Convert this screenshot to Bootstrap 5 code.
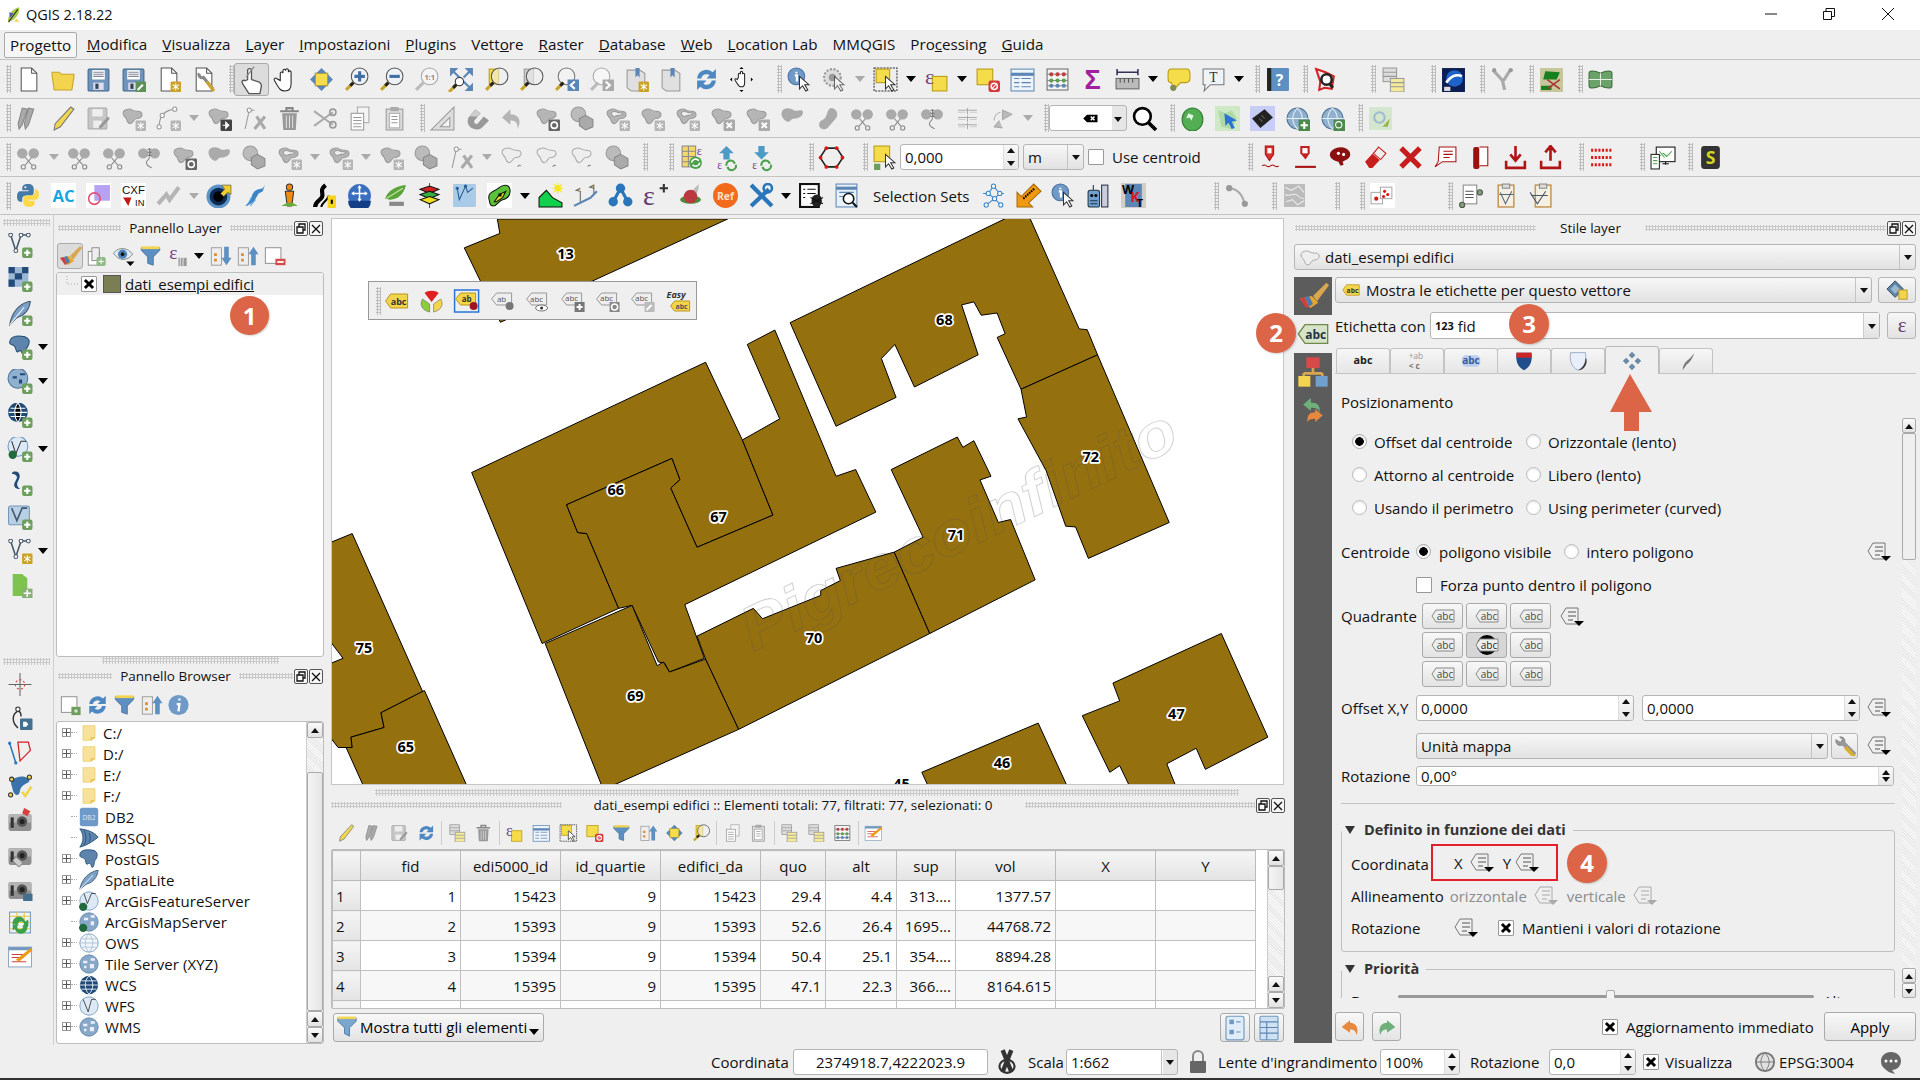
<!DOCTYPE html>
<html lang="it"><head><meta charset="utf-8"><title>QGIS 2.18.22</title>
<link href="https://cdn.jsdelivr.net/npm/bootstrap@5.3.0/dist/css/bootstrap.min.css" rel="stylesheet">
<script src="https://cdn.jsdelivr.net/npm/bootstrap@5.3.0/dist/js/bootstrap.bundle.min.js"></script>
<style>
html,body{width:1920px;height:1080px;overflow:hidden;margin:0}
body{position:relative;background:#efefef;font:15px/1.2 "Open Sans","Liberation Sans",sans-serif;color:#111}
.ttl{height:30px;background:#fff;padding-left:5px;font-size:14.5px}
.wc{width:16px;height:16px;position:absolute;top:6px}.w1{left:1763px}.w2{left:1821px}.w3{left:1880px}
.qm{height:30px;border-bottom:1px solid #c4c4c4;padding-left:4px;font-size:15.2px}
.mi{padding:0 7.5px;line-height:24px;white-space:nowrap;margin-top:2px}
.mi.on{border:1px solid #aaa;background:#f6f6f6;border-radius:2px;padding:0 5px;margin-right:2px}
.tbr{height:39px;border-bottom:1px solid #c4c4c4;display:flex;align-items:center}
.tbr.l{height:38px}
.ic{width:35px;height:25px;flex:none;overflow:visible}
.ic.act{background:#dcdcdc;border:1px solid #aaa;border-radius:3px;height:33px}
.ar{flex:none;width:16px;height:6px;position:relative}
.ar::after{content:"";position:absolute;left:3px;top:0;border:5px solid transparent;border-top:6px solid #000;border-bottom:0}
.ar.g::after{border-top-color:#aaa}
.gr{flex:none;width:5px;height:28px;margin-left:8px;background:radial-gradient(circle,#bdbdbd 1px,transparent 1.3px) 0 0/3px 3px}
.gr.f{margin-left:6px}
.m4{margin-left:4px}.m7{margin-left:7px}.m9{margin-left:9px}.m11{margin-left:11px}.m14{margin-left:14px}.m18{margin-left:18px}.m20{margin-left:20px}.m21{margin-left:21px}.m23{margin-left:23px}.m28{margin-left:28px}.m30{margin-left:30px}.m48{margin-left:48px}.m63{margin-left:63px}
.mn{height:830px}
.lt{width:54px;border-right:1px solid #cfcfcf;flex:none}
.lt .ic{width:38px;height:25px}
.lt .ar{margin-left:-4px}
.lt .rw{height:34px;padding-left:1px;display:flex;align-items:center}
.hg{flex:1;height:6px;background:radial-gradient(circle,#c9c9c9 1px,transparent 1.3px) 0 0/3px 3px}
.hgl{height:7px;margin:4px 3px 2px;background:radial-gradient(circle,#c9c9c9 1px,transparent 1.3px) 0 0/3px 3px}
.hgs{margin-top:56px}
.lp{width:273px;flex:none}
.ph{height:22px;margin-top:2px;padding:0 4px;display:flex;align-items:center;font-size:13.5px;gap:8px;white-space:nowrap}
.db{flex:none;width:14px;height:15px;border:1px solid #555;border-radius:2px;background:#f6f6f6;margin-left:-7px;display:block}
.ptb{height:33px;display:flex;align-items:center;padding-left:3px}
.ptb .ic{width:27px;height:22px}
.ptb .ic.act{height:26px;width:26px}
.tr{background:#fff;border:1px solid #bdbdbd;border-radius:3px;margin:0 3px 0 2px;position:relative;overflow:hidden}
.t1{height:385px}.t2{height:323px}
.lrow{height:22px;background:#efefef;display:flex;align-items:center;padding-left:8px}
.cb{flex:none;width:16px;height:16px;border:1px solid #999;background:#fff;display:inline-block;border-radius:1px}
.cb svg{display:block;width:14px;height:14px}
.swc{width:18px;height:18px;background:#7b7e52;border:1px solid #555;margin:0 4px 0 6px}
.brow{height:21px;display:flex;align-items:center;letter-spacing:.1px;white-space:nowrap}
.exp{width:9px;height:9px;border:1px solid #999;margin-left:5px;flex:none;background:linear-gradient(90deg,transparent 3px,#555 3px,#555 4px,transparent 4px),linear-gradient(transparent 3px,#555 3px,#555 4px,transparent 4px)}
.exp0{width:9px;margin-left:5px;flex:none}
.dts{flex:none;width:6px;border-top:1px dotted #aaa;margin:0 2px 0 0}
.bi{width:20px;height:20px;flex:none;margin-right:6px}
.bi.f{width:16px;margin:0 6px 0 2px}
.vsb{position:absolute;right:0;top:0;bottom:0;width:17px;background:#efefef;border-left:1px solid #ccc;display:flex;flex-direction:column}
.sbtn{height:16px;flex:none;background:linear-gradient(#fafafa,#e2e2e2);border:1px solid #aaa;border-radius:2px;position:relative}
.sbtn::after{content:"";position:absolute;left:50%;top:50%;margin:-2px 0 0 -4px;border:4px solid transparent;border-bottom:5px solid #111;border-top:0}
.sbtn.dn::after{border-bottom:0;border-top:5px solid #111}
.strk{flex:none;height:34px;background:repeating-linear-gradient(45deg,#e8e8e8 0 1px,#f8f8f8 1px 2px)}
.strk.flex-grow-1{flex:1 1 0;height:auto}
.sthm{flex:1;background:linear-gradient(90deg,#f4f4f4,#e6e6e6);border:1px solid #aaa;border-radius:2px}
.sthm.tth{flex:none;height:24px}
.ct{width:960px;flex:none}
.cv{position:relative;height:567px;width:953px;margin:3px 0 0 4px;background:#fff;border:1px solid #c6c6c6;overflow:hidden}
.cv>svg{position:absolute;left:0;top:0;width:953px;height:567px}
.ftb{position:absolute;left:36px;top:62px;width:329px;height:39px;background:#efefef;border:1px solid #999;display:flex;align-items:center;padding-left:7px}
.ftb .ic{width:35.2px;height:24px}
.ftb .gr{margin:0 -2px 0 0}
.at{height:18px;padding:0 2px 0 4px}
.atb{height:35px;display:flex;align-items:center;padding:3px 0 0 6px}
.atb .is{width:26.7px;height:18px;flex:none;overflow:visible}
.vs{width:1px;height:24px;background:#ccc;flex:none;margin:0 1.5px}
.twr{height:160px;margin:0 2px 0 4px;border:1px solid #bdbdbd;background:#fff;position:relative;overflow:hidden;border-radius:2px}
table.qt{table-layout:fixed;width:924px;margin:0;border-collapse:collapse;font-size:15px}
.qt th{height:30px;font-weight:400;text-align:center;background:linear-gradient(#f5f5f5,#e4e4e4);border:1px solid #bbb;padding:0;white-space:nowrap}
.qt td{height:30px;text-align:right;padding:0 4px;border:1px solid #c0c0c0;white-space:nowrap;overflow:hidden}
.qt tr:nth-child(even) td{background:#f7f7f7}
.qt td.rh{text-align:left;background:linear-gradient(#f5f5f5,#e4e4e4)!important;padding-left:3px}
.c28{width:28px}.c100{width:100px}.c65{width:65px}.c71{width:71px}.c59{width:59px}
.afoot{height:36px;align-items:center;padding:0 3px 0 6px}
.qbtn{background:linear-gradient(#f8f8f8,#e4e4e4);border:1px solid #aaa;border-radius:3px;display:flex;align-items:center;flex:none;padding:0}
.fbtn{width:211px;height:29px;padding-left:3px;gap:3px;white-space:nowrap}
.fbtn svg{width:20px;height:22px}
.ms-n{margin-left:-4px;margin-top:9px}
.rp{flex:1;min-width:0}
.rc{height:26px;margin:5px 4px 0 7px}
.qc{background:linear-gradient(#f7f7f7,#e2e2e2);border:1px solid #b5b5b5;border-radius:3px;display:flex;align-items:center;flex:none;position:relative}
.qc>.ca{position:absolute;right:0;top:0;bottom:0;width:16px;border-left:1px solid #c4c4c4}
.qc>.ca::after{content:"";position:absolute;left:4px;top:50%;margin-top:-2px;border:4px solid transparent;border-top:5px solid #111;border-bottom:0}
.qi{background:#fff;border:1px solid #b5b5b5;border-radius:3px;display:flex;align-items:center;flex:none;position:relative;padding-left:4px}
.qi>.sp2{position:absolute;right:0;top:0;bottom:0;width:15px;border-left:1px solid #ddd;background:linear-gradient(#f8f8f8,#e8e8e8);border-radius:0 3px 3px 0}
.sp2::before,.sp2::after{content:"";position:absolute;left:3px;border:4px solid transparent}
.sp2::before{top:3px;border-bottom:5px solid #111;border-top:0}
.sp2::after{bottom:3px;border-top:5px solid #111;border-bottom:0}
.sb{width:38px;margin-left:7px;background:#5c5c5c;height:766px;flex:none}
.sb .si{height:38px;display:flex;align-items:center;justify-content:center}
.sb .si svg{width:32px;height:32px}
.sb .si svg.sm{width:26px;height:26px}
.sb .si.sel{background:#efefef}
.rm{width:581px;margin-left:3px;flex:none}
.rr1{height:26px;gap:6px}
.rr2{height:27px;gap:7px;margin-top:9px;align-items:center}
.ltxt{white-space:nowrap}
.w88{width:88px}
.tabs{height:28px;margin-top:7px;border-bottom:1px solid #c4c4c4;padding-left:1px;align-items:flex-end}
.qtb{width:54px;height:25px;background:linear-gradient(#f6f6f6,#e6e6e6);border:1px solid #c4c4c4;border-bottom:0;border-radius:3px 3px 0 0;display:flex;justify-content:center;align-items:center;margin-right:-.2px}
.qtb svg{width:26px;height:20px;overflow:visible}
.qtb.on{height:28px;background:#efefef;margin-bottom:-1px;border-color:#bbb}
.ps{height:44px;padding:11px 0 0 6px;display:flex;align-items:center}
.sa{height:580px;gap:7px}
.bd{width:554px;margin-left:6px;overflow:hidden;flex:none}
.svb{width:14px;flex:none;display:flex;flex-direction:column}
.svb .thm{height:127px;flex:none;background:#efefef;border:1px solid #aaa;border-radius:2px}
.svb .trk{flex:1;background:repeating-linear-gradient(45deg,#e8e8e8 0 1px,#f8f8f8 1px 2px)}
.svb .sbtn{height:15px}
.rgrid{padding-top:7px;padding-left:11px;height:107px}
.rg{height:33px;align-items:center;white-space:nowrap}
.rg>div{width:174px;display:flex;align-items:center;gap:7px}
.form-check-input.qr{width:15px;height:15px;margin:0;flex:none;border:1px solid #bbb;background:#fff;box-shadow:inset 0 1px 2px rgba(0,0,0,.12)}
.form-check-input.qr:checked{background:radial-gradient(circle,#000 4px,#fff 4.6px);border-color:#aaa}
.rw2{height:33px;align-items:center;white-space:nowrap}
.lb{width:75px;flex:none}
.lq{width:81px}
.qg{display:grid;grid-template-columns:repeat(3,41px);grid-auto-rows:26px;gap:3px}
.qb{background:linear-gradient(#f8f8f8,#e3e3e3);border:1px solid #aaa;border-radius:3px;display:flex;align-items:center;justify-content:center}
.qb svg{width:24px;height:16px;overflow:visible}
.qb.on{background:#d6d6d6}
.dp{width:24px;height:20px;flex:none}
.inp{height:26px}
.wcv{width:124.5px}
.rcn{margin-top:10px}.rq2{margin-top:2px}
.ro2{margin-top:8px}.so{width:218px}
.ru{margin-top:12px}.su{width:412px}.sw{width:27px;margin-left:3px}
.rr{margin-top:7px}.srt{width:478px;height:20px}
.ln2{height:1px;background:#c4c4c4;margin-top:17px}
.grp{border:1px solid #c0c0c0;border-radius:3px;position:relative;height:122px;margin-top:26px;padding:17px 0 0 9px;width:554px}
.grp+.grp{margin-top:17px}
.gl{position:absolute;left:0;top:-12px;background:#efefef;font-weight:700;color:#333;display:flex;align-items:center;gap:9px;padding:0 7px 0 3px;font-size:14.5px;height:22px}
.gl i{border:5.5px solid transparent;border-top:8px solid #333;border-bottom:0}
.gr2{height:32px;align-items:center;white-space:nowrap}
.bx{width:127px;height:37px;border:2px solid #e3202a;margin:-3px 0 0 0;flex:none;padding-left:21px;align-items:center}
.gry{color:#8c8c8c}
.lb2a{width:80px;flex:none}
.lb2b{width:auto;margin-right:6px}
.lb2c{width:103px;flex:none}
.sld{position:absolute;left:56px;top:25px;width:416px;height:3px;background:#999;border-radius:2px}
.shd{position:absolute;left:208px;top:-5px;width:9px;height:12px;border:1px solid #aaa;border-radius:2px;background:#f4f4f4}
.plo,.phi{position:absolute;top:22px}.plo{left:9px}.phi{left:481px}
.mm{height:29px;margin-top:14px;align-items:center}
.bu{width:29px;height:29px}
.agc{margin-left:201px}
.agt{width:203px;white-space:nowrap}
.ba{width:92px;height:29px}
.stb{height:33px;align-items:center;white-space:nowrap}
.s1{margin-left:711px;width:82px}.s2{width:195px;height:26px;justify-content:center;padding:0}.s3{width:30px;height:26px;margin:0 4px}.s4{width:38px;margin-left:2px}.s5{width:112px;height:26px;background:linear-gradient(90deg,#fff 0 96px,#e6e6e6 96px)}.s6{width:26px;height:24px;margin:0 7px}.s7{width:162px}.s8{width:80px;height:26px}.s9{margin-left:10px;width:79px}.s10{width:87px;height:26px}.s11{margin-left:7px}.s12{width:88px;margin-left:6px}.s13{width:24px;height:22px}.s14{margin-left:2px;width:99px}.s15{width:26px;height:24px}
.stp{height:2px;background:#333}
.ov{position:absolute;width:40px;height:40px;border-radius:50%;background:#dc6547;color:#fff;font:700 24px/40px "Open Sans",sans-serif;text-align:center;box-shadow:1px 1px 2px rgba(0,0,0,.18)}
.o1{left:230px;top:296px;height:39px;width:39px}.o2{left:1256px;top:313px}.o3{left:1509px;top:304px}.o4{left:1567px;top:843px}
.arw{position:absolute;left:1609px;top:374px;width:44px;height:58px}
.spx{position:absolute;width:0;height:0;overflow:hidden}
.h24{height:24px}
.mt7{margin-top:7px}
.flex-none{flex:none}
.sa2{width:119px;margin-left:-3px}.sb2{width:61px}
.cl{width:537px;height:26px}.cr{width:38px;height:26px}
.lb2{width:88px}.ce{width:450px;height:27px}.cf{width:29px;height:27px}
.sz1{font-size:11px}
.qcar{position:absolute;right:0;top:0;bottom:0;width:16px;border-left:1px solid #ccc;background:linear-gradient(#f7f7f7,#e2e2e2)}
.qcar::after{content:"";position:absolute;left:4px;top:50%;margin-top:-2px;border:4px solid transparent;border-top:5px solid #111;border-bottom:0}
.cmb1{width:78px;height:26px;margin-left:0;padding-right:24px;background:linear-gradient(90deg,#fff 0 62px,#e6e6e6 62px)}
.cmb1::after{content:"";position:absolute;right:4px;top:11px;border:4px solid transparent;border-top:5px solid #111;border-bottom:0}
</style></head><body>
<svg class="spx" aria-hidden="true"><defs>
<g id="gs"><rect x="14" y="14" width="10" height="10" rx="1" fill="#b5b5b5"/><path d="M19 15.500v7M16 17l6 4M22 17l-6 4" stroke="#fff"/></g>
<g id="ys"><rect x="14" y="14" width="10" height="10" rx="1" fill="#c9a227"/><path d="M19 15.500v7M16 17l6 4M22 17l-6 4" stroke="#fff"/></g>
<g id="pl"><rect x="14" y="14" width="10" height="10" rx="2" fill="#6c9e5c"/><path d="M19 16v6M16 19h6" stroke="#fff" stroke-width="2"/></g>
<g id="cur"><path d="M12 9v12l3-3 3 5 2-1-3-5h4z" fill="#fff" stroke="#333"/></g>
<g id="bb"><path d="M2 7c0-4 6-5 9-3s8 0 9 3-2 5-5 5-3 5-6 5-3-3-4-5-3-2-3-5z" fill="#b5b5b5" stroke="#999"/></g>
<g id="bw"><path d="M2 7c0-4 6-5 9-3s8 0 9 3-2 5-5 5-3 5-6 5-3-3-4-5-3-2-3-5z" fill="#eee" stroke="#aaa"/></g>
<g id="mh"><path d="M9 15l-7 7" stroke="#caa52c" stroke-width="3"/><path d="M9 15l-3 3" stroke="#222" stroke-width="3"/></g>
<g id="tg"><path d="M1 12l5-7h17v14H6z" fill="#f3d44a" stroke="#b8971a"/></g>
<g id="gb"><circle cx="12" cy="12" r="10" fill="#8fb0cf" stroke="#4f7397"/><path d="M2 12h20M12 2c-6 6-6 14 0 20M12 2c6 6 6 14 0 20" stroke="#e5eef5" fill="none"/></g>
<g id="dc"><path d="M5 1h10l5 5v17H5z" fill="#fff" stroke="#555"/><path d="M15 1v5h5" fill="none" stroke="#555"/></g>
<g id="fl"><rect x="2" y="2" width="20" height="21" rx="1" fill="#6f94bb" stroke="#44658a"/><rect x="6" y="3" width="12" height="9" fill="#fff"/><path d="M7 5h10M7 7h10M7 9h10" stroke="#889"/><rect x="7" y="15" width="10" height="7" fill="#dde"/><rect x="9" y="16" width="3" height="5" fill="#345"/></g>
<g id="qt"><path d="M1 8l4-6h18v12H5z" fill="#eee" stroke="#888"/></g>
<g id="cmo"><rect x="1" y="6" width="22" height="16" rx="2" fill="#8f8f8f"/><rect x="1" y="6" width="22" height="8" fill="#b5b5b5"/><circle cx="14" cy="13" r="5" fill="#555"/><circle cx="14" cy="13" r="2.500" fill="#222"/><rect x="3" y="9" width="3" height="10" fill="#333"/></g>
</defs>
<symbol id="n" viewBox="0 0 24 24"><use href="#dc"/></symbol>
<symbol id="o" viewBox="0 0 24 24"><path d="M1 8V5h7l2 2h12v3l-2 12H3z" fill="#f2d44f" stroke="#c9a227"/></symbol>
<symbol id="s" viewBox="0 0 24 24"><use href="#fl"/></symbol>
<symbol id="sa" viewBox="0 0 24 24"><use href="#fl"/><rect x="14" y="14" width="10" height="10" fill="#5d9155"/><path d="M16 22l5-5" stroke="#fff" stroke-width="2"/></symbol>
<symbol id="np" viewBox="0 0 24 24"><use href="#dc"/><use href="#ys"/></symbol>
<symbol id="cm" viewBox="0 0 24 24"><use href="#dc"/><path d="M8 6a3 3 0 004 4l9 11" stroke="#888" stroke-width="3" fill="none"/><path d="M15 14l7 9" stroke="#caa52c" stroke-width="3"/></symbol>
<symbol id="tp" viewBox="0 0 24 24"><path d="M9 12V5a1.500 1.500 0 013 0v7l6 2c2 1 2 2 1.500 4l-1 5H10l-5-8c-1-2 1-3 2-2z" fill="#fff" stroke="#555"/><path d="M8 10l6-8" stroke="#888"/></symbol>
<symbol id="h" viewBox="0 0 24 24"><path d="M6 13V6a1.300 1.300 0 012.600 0V3.500a1.300 1.300 0 012.600 0V3a1.300 1.300 0 012.600 0V5a1.300 1.300 0 012.600 0v11c0 4-2 7-6 7s-5-2-7-5l-3-5c-1-2 1-3 2-2z" fill="#fff" stroke="#222"/></symbol>
<symbol id="ps" viewBox="0 0 24 24"><rect x="6" y="6" width="12" height="12" fill="#f5dc4a" stroke="#b89a10"/><path d="M12 1l5 5H7zM12 23l5-5H7zM1 12l5-5v10zM23 12l-5-5v10z" fill="#5b86b5"/></symbol>
<symbol id="zi" viewBox="0 0 24 24"><circle cx="15" cy="9" r="8" fill="#eef2f6" stroke="#555"/><path d="M10 9h10M15 4v10" stroke="#3f6fa5" stroke-width="3"/><use href="#mh"/></symbol>
<symbol id="zo" viewBox="0 0 24 24"><circle cx="15" cy="9" r="8" fill="#eef2f6" stroke="#555"/><path d="M10 9h10" stroke="#3f6fa5" stroke-width="3"/><use href="#mh"/></symbol>
<symbol id="zf" viewBox="0 0 24 24"><path d="M1 1h8L1 9zM23 1h-8l8 8zM23 23h-8l8-8z" fill="#5b86b5"/><path d="M4 4l16 16M20 4l-6 6" stroke="#5b86b5" stroke-width="2"/><circle cx="10" cy="14" r="4" fill="#fff" stroke="#333"/><use href="#mh" transform="translate(-2 2)"/></symbol>
<symbol id="zs" viewBox="0 0 24 24"><rect x="5" y="2" width="9" height="14" fill="#f5dc4a" stroke="#b89a10"/><circle cx="15" cy="9" r="8" fill="#eee" fill-opacity=".6" stroke="#555"/><use href="#mh"/></symbol>
<symbol id="zl" viewBox="0 0 24 24"><rect x="5" y="2" width="9" height="14" fill="#ccc" stroke="#999"/><circle cx="15" cy="9" r="8" fill="#eee" fill-opacity=".6" stroke="#555"/><use href="#mh"/></symbol>
<symbol id="zp" viewBox="0 0 24 24"><circle cx="12" cy="9" r="8" fill="#f2f2f2" stroke="#777"/><use href="#mh"/><rect x="13" y="12" width="11" height="11" fill="#5b86b5"/><path d="M20 14l-4 3.500 4 3.500" fill="none" stroke="#fff" stroke-width="2"/></symbol>
<symbol id="zn" viewBox="0 0 24 24"><circle cx="12" cy="9" r="8" fill="#f6f6f6" stroke="#aaa"/><path d="M9 15l-7 7" stroke="#bbb" stroke-width="3"/><rect x="13" y="12" width="11" height="11" fill="#aaa"/><path d="M16 14l4 3.500-4 3.500" fill="none" stroke="#fff" stroke-width="2"/></symbol>
<symbol id="bk" viewBox="0 0 24 24"><path d="M3 3h12l5 3v17H7l-4-3z" fill="#e0e0e0" stroke="#999"/><path d="M11 1v9l2-2 2 2V1" fill="#5b86b5"/><use href="#ys"/></symbol>
<symbol id="bm" viewBox="0 0 24 24"><path d="M3 3h12l5 3v17H7l-4-3z" fill="#e0e0e0" stroke="#999"/><path d="M11 1v9l2-2 2 2V1" fill="#5b86b5"/></symbol>
<symbol id="rf" viewBox="0 0 24 24"><path d="M3 11a9 9 0 0115-6l3-3v9h-9l3-3a5 5 0 00-8 3zM21 13a9 9 0 01-15 6l-3 3v-9h9l-3 3a5 5 0 008-3z" fill="#4d88c2"/></symbol>
<symbol id="pt" viewBox="0 0 24 24"><path d="M9 10V7a1 1 0 012 0V5a1 1 0 012 0v2a1 1 0 012 0v8c0 2-1 4-3 4s-3-1-4-3l-2-3c-1-2 1-2 2-1z" fill="#fff" stroke="#222"/><path d="M12 0l2 2h-4zM12 24l2-2h-4zM1 12l2-2v4zM23 12l-2-2v4z"/></symbol>
<symbol id="id" viewBox="0 0 24 24"><circle cx="9" cy="9" r="8" fill="#6f99c6" stroke="#4a72a0"/><path d="M9 4.500v1.500M7.500 8H9.500v6" stroke="#fff" stroke-width="2" fill="none"/><use href="#cur"/></symbol>
<symbol id="ac" viewBox="0 0 24 24"><circle cx="10" cy="10" r="8" fill="#ddd" stroke="#999" stroke-width="2" stroke-dasharray="2 1.500"/><circle cx="10" cy="10" r="3.500" fill="#999"/><g opacity=".7"><use href="#cur"/></g></symbol>
<symbol id="sl" viewBox="0 0 24 24"><rect x="1" y="1" width="22" height="22" fill="none" stroke="#333" stroke-dasharray="2 1"/><rect x="3" y="2" width="13" height="13" fill="#f5dc4a" stroke="#b89a10"/><use href="#cur"/></symbol>
<symbol id="ds" viewBox="0 0 24 24"><rect x="2" y="2" width="15" height="15" fill="#f5dc4a" stroke="#b89a10"/><rect x="13" y="13" width="11" height="11" rx="2" fill="#d43a3a"/><circle cx="18.500" cy="18.500" r="3" fill="none" stroke="#fff" stroke-width="1.400"/><path d="M16 21l5-5" stroke="#fff"/></symbol>
<symbol id="tb" viewBox="0 0 24 24"><rect x="1" y="2" width="22" height="21" fill="#eef4fa" stroke="#5b86b5"/><path d="M1 7h22" stroke="#5b86b5" stroke-width="3"/><path d="M4 11h5M11 11h9M4 15h5M11 15h9M4 19h5M11 19h9" stroke="#5b86b5"/></symbol>
<symbol id="ab" viewBox="0 0 24 24"><path d="M2 2h20v20H2z" fill="#f4f4f4" stroke="#666"/><path d="M2 7h20M2 13h20M2 18h20" stroke="#888"/><path d="M6 7h.1M12 7h.1M18 7h.1" stroke="#c04040" stroke-width="4" stroke-linecap="round"/><path d="M6 13h.1M12 13h.1M18 13h.1" stroke="#5b9e50" stroke-width="4" stroke-linecap="round"/><path d="M6 18h.1M12 18h.1M18 18h.1" stroke="#5b86b5" stroke-width="4" stroke-linecap="round"/></symbol>
<symbol id="ms" viewBox="0 0 24 24"><path d="M2 5h20M2 2v6M22 2v6" stroke="#335" stroke-width="1.500"/><rect x="1" y="11" width="22" height="10" fill="#bbb" stroke="#666"/><path d="M5 11v4M9 11v4M13 11v4M17 11v4" stroke="#555"/></symbol>
<symbol id="bl" viewBox="0 0 24 24"><path d="M5 2h15c3 0 3 3 3 5v4c0 3-2 4-5 4h-4l-4 4c-2 2-4 2-4 0s0-4-1-4c-3 0-3-3-3-4V6c0-3 1-4 3-4z" fill="#f5dc4a" stroke="#b89a10"/><circle cx="7" cy="20" r="3" fill="#7b8f55"/></symbol>
<symbol id="rq" viewBox="0 0 24 24"><path d="M3 2l9 3 8 4-2 12-7-1-5 2 1-8z" fill="none" stroke="#d02525" stroke-width="2"/><circle cx="13" cy="12" r="5" fill="#fff" stroke="#222" stroke-width="2.500"/><path d="M16 16l3 4" stroke="#222" stroke-width="3"/></symbol>
<symbol id="tt" viewBox="0 0 24 24"><rect x="2" y="1" width="13" height="13" fill="#ddd" stroke="#999"/><path d="M2 5h13M2 9h13" stroke="#999"/><rect x="9" y="11" width="13" height="13" fill="#f5ea9a" stroke="#999"/><path d="M9 15h13M9 19h13" stroke="#999"/></symbol>
<symbol id="ge" viewBox="0 0 24 24"><rect x="1" y="1" width="22" height="23" fill="#0b1f55"/><circle cx="13" cy="11" r="8" fill="#1e64c8"/><path d="M5 15c6-8 12-8 15-6" stroke="#fff" stroke-width="2.500" fill="none"/><rect x="3" y="19" width="6" height="4" fill="#ddd"/></symbol>
<symbol id="yy" viewBox="0 0 24 24"><path d="M3 3l9 10 2 9M20 2l-7 11" stroke="#aaa" stroke-width="3" fill="none"/><circle cx="4" cy="3" r="2" fill="#999"/><circle cx="20" cy="3" r="2" fill="#999"/></symbol>
<symbol id="cls" viewBox="0 0 24 24"><rect x="1" y="1" width="22" height="23" fill="#c7c59b"/><path d="M6 4l14 1-3 7H4zM2 18h10v4H2z" fill="#17801f"/><path d="M8 12l12 9M20 12L8 21" stroke="#a33" stroke-width="1.500"/></symbol>
<symbol id="gbf" viewBox="0 0 24 24"><path d="M1 6c0-3 5-3 11 0 6-3 11-3 11 0v12c0 3-5 3-11 0-6 3-11 3-11 0z" fill="#6aa26a" stroke="#3c6b3c"/><path d="M12 6v12M1 12h22" stroke="#e5f0e5"/></symbol>
<symbol id="gp" viewBox="0 0 24 24"><path d="M6 2L2 17l1 5 3-4 5-15zM12 2L8 17l1 5 3-4 5-15z" fill="#aaa" stroke="#888"/></symbol>
<symbol id="pc" viewBox="0 0 24 24"><path d="M19 1l3 2L9 20l-6 3 1-6z" fill="#f0d64e" stroke="#777"/></symbol>
<symbol id="sv2" viewBox="0 0 24 24"><rect x="2" y="2" width="18" height="20" rx="1" fill="#c6c6c6" stroke="#aaa"/><rect x="6" y="3" width="10" height="7" fill="#eee"/><rect x="7" y="14" width="8" height="7" fill="#eee"/><path d="M21 10l2 2-9 10-2-2z" fill="#999"/></symbol>
<symbol id="bs" viewBox="0 0 24 24"><use href="#bb"/><use href="#gs"/></symbol>
<symbol id="bwh" viewBox="0 0 24 24"><use href="#bw"/><path d="M17 21c1-2 2-2 3-1" stroke="#888" fill="none"/></symbol>
<symbol id="nd" viewBox="0 0 24 24"><path d="M3 20C3 10 8 4 18 3" fill="none" stroke="#999"/><circle cx="3" cy="20" r="2" fill="#fff" stroke="#999"/><circle cx="18" cy="3" r="2" fill="#fff" stroke="#999"/><circle cx="6" cy="9" r="2" fill="#fff" stroke="#999"/><use href="#gs"/></symbol>
<symbol id="mv" viewBox="0 0 24 24"><use href="#bb"/><rect x="13" y="13" width="11" height="11" rx="1" fill="#444"/><path d="M15 18.500h4M18 15.500l3 3-3 3z" stroke="#fff" fill="#fff"/></symbol>
<symbol id="nt" viewBox="0 0 24 24"><path d="M3 22L7 4h5" fill="none" stroke="#999"/><circle cx="7" cy="4" r="2" fill="#fff" stroke="#999"/><path d="M12 22L22 10M14 10l8 12" stroke="#aaa" stroke-width="3"/></symbol>
<symbol id="tr" viewBox="0 0 24 24"><path d="M3 5h18M9 5V2h6v3" stroke="#888" stroke-width="2" fill="none"/><path d="M5 7h14l-1 16H6z" fill="#999"/><path d="M9 9v12M12 9v12M15 9v12" stroke="#ddd"/></symbol>
<symbol id="sc" viewBox="0 0 24 24"><path d="M2 5l18 13M2 19L20 6" stroke="#aaa" stroke-width="2"/><circle cx="20" cy="6" r="3" fill="none" stroke="#999" stroke-width="1.500"/><circle cx="20" cy="18" r="3" fill="none" stroke="#999" stroke-width="1.500"/></symbol>
<symbol id="cp" viewBox="0 0 24 24"><rect x="10" y="1" width="11" height="15" fill="#f4f4f4" stroke="#aaa"/><rect x="4" y="7" width="12" height="16" fill="#fff" stroke="#999"/><path d="M6 11h8M6 14h8M6 17h8M6 20h8" stroke="#999"/></symbol>
<symbol id="pa" viewBox="0 0 24 24"><rect x="4" y="3" width="16" height="20" fill="#ddd" stroke="#999"/><rect x="8" y="1" width="8" height="4" fill="#aaa"/><rect x="7" y="7" width="10" height="14" fill="#fff" stroke="#aaa"/><path d="M9 10h6M9 13h6M9 16h6" stroke="#999"/></symbol>
<symbol id="tru" viewBox="0 0 24 24"><path d="M1 23h22V1z" fill="#ddd" stroke="#999"/><path d="M10 20h9v-9z" fill="#f4f4f4" stroke="#999"/></symbol>
<symbol id="mag" viewBox="0 0 24 24"><path d="M4 10l6-7 5 4-6 7c-1 2 1 4 3 3l6-7 5 4-7 7c-5 3-10 1-12-2s-2-6 0-9z" fill="#999"/><path d="M4 10l6-7 5 4-3 3z" fill="#ccc"/></symbol>
<symbol id="un" viewBox="0 0 24 24"><path d="M10 3L2 11l8 7v-4c5 0 7 2 7 8 4-8 1-14-7-14z" fill="#b5b5b5"/></symbol>
<symbol id="bu" viewBox="0 0 24 24"><use href="#bb"/><rect x="13" y="13" width="11" height="11" rx="1" fill="#666"/><circle cx="18.500" cy="18.500" r="3" fill="none" stroke="#fff" stroke-width="1.500"/></symbol>
<symbol id="hx" viewBox="0 0 24 24"><circle cx="8" cy="8" r="7" fill="#bbb" stroke="#999"/><path d="M15 9l7 4v7l-7 3-6-4v-7z" fill="#aaa" stroke="#888"/></symbol>
<symbol id="rg" viewBox="0 0 24 24"><use href="#bb"/><path d="M6 7c0-2 4-2 6-1s4 0 5 1-2 2-4 2-3 1-4 1-3-1-3-3z" fill="#eee" stroke="#999"/><use href="#gs"/></symbol>
<symbol id="rx" viewBox="0 0 24 24"><use href="#bb"/><rect x="13" y="13" width="11" height="11" rx="1" fill="#aaa"/><path d="M16 16l5 5M21 16l-5 5" stroke="#fff" stroke-width="2"/></symbol>
<symbol id="lf" viewBox="0 0 24 24"><path d="M2 5c2-4 8-3 11-1s9-2 9 2-4 6-8 6-4 4-7 3-7-6-5-10z" fill="#aaa"/></symbol>
<symbol id="bn" viewBox="0 0 24 24"><path d="M16 2c5 1 7 6 4 10l-8 9c-4 3-9 0-8-4s4-3 6-6 2-9 6-9z" fill="#aaa"/></symbol>
<symbol id="sb" viewBox="0 0 24 24"><circle cx="6" cy="8" r="5" fill="#aaa"/><circle cx="17" cy="8" r="5" fill="#aaa"/><path d="M9 12l6 7M15 12l-6 7" stroke="#888"/><circle cx="7" cy="21" r="2" fill="none" stroke="#888"/><circle cx="17" cy="21" r="2" fill="none" stroke="#888"/></symbol>
<symbol id="rs" viewBox="0 0 24 24"><circle cx="6" cy="8" r="5" fill="#aaa"/><circle cx="17" cy="8" r="5" fill="#aaa"/><path d="M10 4h4M10 7h4M10 10h4M12 3v8" stroke="#777"/><path d="M12 11c0 4-3 3-3 6s4 4 5 5" fill="none" stroke="#888"/></symbol>
<symbol id="ls" viewBox="0 0 24 24"><path d="M3 4h18M3 11h18M3 18h18M12 2v6M12 9v6M12 16v6" stroke="#aaa"/><path d="M3 6h7M14 6h7M3 13h7M14 13h7M3 20h7M14 20h7" stroke="#ccc"/></symbol>
<symbol id="ro" viewBox="0 0 24 24"><path d="M12 4v9l9-5zM12 21l-8-1 5-6" fill="#bbb" stroke="#aaa"/><path d="M10 6a8 8 0 00-6 8" fill="none" stroke="#aaa"/></symbol>
<symbol id="ers" viewBox="0 0 24 24"><path d="M3 12.500l5-5h14v10H8z"/><path d="M13 10l5 5M18 10l-5 5" stroke="#fff" stroke-width="2"/></symbol>
<symbol id="mgb" viewBox="0 0 24 24"><circle cx="10" cy="10" r="8" fill="#fff" stroke="#000" stroke-width="2.500"/><path d="M16 16l7 7" stroke="#000" stroke-width="3.500"/></symbol>
<symbol id="gg" viewBox="0 0 24 24"><ellipse cx="12" cy="13" rx="10" ry="11" fill="#53ad53" stroke="#2f7a2f"/><path d="M8 7l5 2-2 5-2-3-3 1z" fill="#e4f5e4"/></symbol>
<symbol id="gmp" viewBox="0 0 24 24"><rect width="24" height="24" fill="#cfe8c6"/><path d="M3 4l7 3 6-3 5 8-5 10-10-2z" fill="#b0d9a5"/><path d="M9 7l12 7-5 1 3 6-3 1-3-6-3 3z" fill="#2a72d8"/></symbol>
<symbol id="bk2" viewBox="0 0 24 24"><rect width="24" height="24" fill="#c7cdf7"/><path d="M2 12l12-9 8 8-12 10z" fill="#222"/><path d="M11 9l3 3M9 12l3 3" stroke="#666"/></symbol>
<symbol id="gl1" viewBox="0 0 24 24"><use href="#gb"/><rect x="13" y="13" width="11" height="11" fill="#4c8a4c"/><path d="M18.500 15v7M15 18.500h7" stroke="#fff" stroke-width="2"/></symbol>
<symbol id="gl2" viewBox="0 0 24 24"><use href="#gb"/><rect x="13" y="13" width="11" height="11" fill="#4c8a4c"/><circle cx="18" cy="18" r="3" fill="none" stroke="#fff"/></symbol>
<symbol id="gm2" viewBox="0 0 24 24"><rect x="1" y="1" width="22" height="22" fill="#d4e6cd"/><circle cx="11" cy="11" r="5" fill="none" stroke="#9cbccf" stroke-width="2"/><path d="M14 20l7-8-2 8z" fill="#9bb34a"/></symbol>
<symbol id="hxr" viewBox="0 0 24 24"><path d="M7 3h10l6 9-6 9H7L1 12z" fill="none" stroke="#222" stroke-width="1.500"/><circle cx="1.500" cy="12" r="1.800" fill="#e01515"/><circle cx="22.500" cy="12" r="1.800" fill="#e01515"/><circle cx="7" cy="3" r="1.800" fill="#e01515"/><circle cx="17" cy="3" r="1.800" fill="#e01515"/><circle cx="7" cy="21" r="1.800" fill="#e01515"/><circle cx="17" cy="21" r="1.800" fill="#e01515"/></symbol>
<symbol id="sp" viewBox="0 0 24 24"><rect x="1" y="1" width="15" height="15" fill="#f5dc4a" stroke="#b89a10"/><rect x="1" y="18" width="6" height="6" fill="#6ba05a"/><use href="#cur"/></symbol>
<symbol id="rp1" viewBox="0 0 24 24"><path d="M7 1h8v8l-4 6-4-6z" fill="#d83030" stroke="#a11"/><rect x="9" y="3" width="4" height="5" fill="#fff"/><path d="M4 20c4-3 4 3 8 0s4 3 8 0" fill="none" stroke="#a11"/></symbol>
<symbol id="rp2" viewBox="0 0 24 24"><path d="M7 1h9v7l-4 6-5-6z" fill="#c02020"/><rect x="9" y="3" width="5" height="5" fill="#fff"/><path d="M2 21h20" stroke="#a11" stroke-width="2"/></symbol>
<symbol id="rb" viewBox="0 0 24 24"><path d="M4 5c5-4 14-4 17 2 2 6-5 8-7 9l1 3-3 1-2-4C3 15-1 9 4 5z" fill="#8d1010"/><circle cx="10" cy="8" r="1.500" fill="#fff"/><circle cx="15" cy="9" r="1.500" fill="#fff"/></symbol>
<symbol id="er" viewBox="0 0 24 24"><path d="M2 16L15 2l7 6L9 22H6z" fill="#c81d1d"/><path d="M10 8l7 6" stroke="#fff" stroke-width="2"/><path d="M15 2l7 6-5 6-7-6z" fill="#eee" stroke="#c81d1d"/></symbol>
<symbol id="xr" viewBox="0 0 24 24"><path d="M3 3l18 18M21 3L3 21" stroke="#c81d1d" stroke-width="5"/></symbol>
<symbol id="cmr" viewBox="0 0 24 24"><path d="M6 2h16v14H9l-7 5 3-5z" fill="#fff" stroke="#a11"/><path d="M10 6h9M10 9h9M10 12h6" stroke="#a11"/></symbol>
<symbol id="bkr" viewBox="0 0 24 24"><rect x="5" y="2" width="6" height="21" rx="2" fill="#9c1010"/><path d="M11 2h8v18h-8" fill="#fff" stroke="#a11"/></symbol>
<symbol id="imp" viewBox="0 0 24 24"><path d="M12 1v13M7 9l5 6 5-6" fill="none" stroke="#b01515" stroke-width="2.500"/><path d="M3 15v7h18v-7" fill="none" stroke="#b01515" stroke-width="2.500"/></symbol>
<symbol id="exq" viewBox="0 0 24 24"><path d="M12 15V2M7 7l5-6 5 6" fill="none" stroke="#b01515" stroke-width="2.500"/><path d="M3 15v7h18v-7" fill="none" stroke="#b01515" stroke-width="2.500"/></symbol>
<symbol id="dtr" viewBox="0 0 24 24"><rect width="24" height="24" fill="#eee"/><path d="M2 5h20M2 12h20M2 19h20" stroke="#e01515" stroke-width="3" stroke-dasharray="2 1.500"/></symbol>
<symbol id="dsk" viewBox="0 0 24 24"><rect x="6" y="2" width="18" height="14" fill="#fff" stroke="#111"/><path d="M8 11l5-3 3 3 5-5M9 6l5 6" stroke="#4ba14b" fill="none"/><path d="M12 18h6M15 16v3" stroke="#111"/><rect x="1" y="9" width="8" height="14" fill="#fff" stroke="#222"/><path d="M3 12h4M3 15h4M3 18h4" stroke="#4ba14b"/></symbol>
<symbol id="py" viewBox="0 0 24 24"><path d="M12 1c-5 0-6 2-6 4v2h6v1H4c-2 0-3 2-3 5s1 5 3 5h2v-3c0-2 2-3 4-3h4c2 0 3-1 3-3V5c0-2-2-4-5-4z" fill="#4479a8"/><path d="M12 23c5 0 6-2 6-4v-2h-6v-1h7c2 0 3-2 3-5s-1-5-3-5h-1v3c0 2-2 3-4 3h-4c-2 0-3 1-3 3v4c0 2 2 4 5 4z" fill="#ffd94a"/><circle cx="9" cy="4" r="1" fill="#fff"/></symbol>
<symbol id="pk" viewBox="0 0 24 24"><rect width="24" height="24" fill="#fff"/><rect x="8" y="2" width="15" height="15" fill="#b6a1f5"/><circle cx="8" cy="15" r="5.500" fill="none" stroke="#e05070" stroke-width="1.500"/></symbol>
<symbol id="ln" viewBox="0 0 24 24"><path d="M2 20l8-9 3 5 9-12" fill="none" stroke="#b5b5b5" stroke-width="4"/></symbol>
<symbol id="ri" viewBox="0 0 24 24"><circle cx="11" cy="13" r="10" fill="#0d2c55" stroke="#5b93c7" stroke-width="3"/><circle cx="11" cy="13" r="5" fill="#000"/><path d="M14 2h9v9l-3-2-4 4-3-3 4-4z" fill="#f2cd2f" stroke="#333" stroke-width=".5"/></symbol>
<symbol id="kg" viewBox="0 0 24 24"><path d="M22 2l-2 3-4 1c-4 1-6 4-7 8-1 3-3 5-6 8 5-1 8-4 10-7l3-5 4-2z" fill="#3a86c8"/><path d="M5 22l4-8M8 22l5-6" stroke="#5ba3dc"/></symbol>
<symbol id="pm" viewBox="0 0 24 24"><circle cx="12" cy="4" r="3" fill="#f08a10" stroke="#333"/><path d="M8 8h8l-1 8-1 6h-4l-1-6z" fill="#f08a10" stroke="#333"/><path d="M4 22l6-3h5l5 3z" fill="#68ad3a"/></symbol>
<symbol id="rd" viewBox="0 0 24 24"><path d="M3 23c0-6 7-7 7-11S8 6 13 2" fill="none" stroke="#000" stroke-width="4"/><path d="M9 23c0-4 7-7 7-11" fill="none" stroke="#000" stroke-width="2"/><rect x="15" y="12" width="8" height="12" fill="#f6d51f"/><path d="M19 16v4" stroke="#000" stroke-width="2"/></symbol>
<symbol id="gnb" viewBox="0 0 24 24"><circle cx="12" cy="12" r="11" fill="#3a6fc0"/><path d="M1 17a11 11 0 0022 0z" fill="#143e85"/><path d="M12 3v14M5 10h14" stroke="#fff" stroke-width="1.500"/><path d="M12 2l2 3h-4zM12 18l2-3h-4zM4 10l3-2v4zM20 10l-3-2v4z" fill="#fff"/></symbol>
<symbol id="lfk" viewBox="0 0 24 24"><path d="M3 15C5 8 13 3 23 2c-2 9-8 14-15 14z" fill="#5ba43a"/><path d="M4 15L20 5" stroke="#cfe9b8"/><rect x="7" y="18" width="14" height="4" fill="#888"/></symbol>
<symbol id="sta" viewBox="0 0 24 24"><path d="M12 0v24" stroke="#d02020"/><path d="M3 6l9-3 9 3-9 4z" fill="#d02020" stroke="#111"/><path d="M3 11l9-3 9 3-9 4z" fill="#36b040" stroke="#111"/><path d="M3 16l9-3 9 3-9 4z" fill="#f0e020" stroke="#111"/></symbol>
<symbol id="nm" viewBox="0 0 24 24"><rect x="1" y="1" width="22" height="22" rx="1" fill="#a9cbe8"/><path d="M5 5l2 11 6-13 2 6 5-4" fill="none" stroke="#235b96"/><circle cx="5" cy="5" r="1.500" fill="#235b96"/><circle cx="13" cy="3" r="1.500" fill="#235b96"/></symbol>
<symbol id="gy" viewBox="0 0 24 24"><rect width="24" height="24" fill="#fff"/><path d="M2 16c-2-8 6-8 9-11s10-5 11 1-3 9-7 10-5 6-9 6-3-3-4-6z" fill="#5cc23a" stroke="#111"/><path d="M7 18l5-7 6-3-3 6-6 4z" fill="#f0e020" stroke="#111"/><path d="M11 10h3v3h-3z" fill="#111"/></symbol>
<symbol id="hl" viewBox="0 0 24 24"><path d="M1 23V14l7-7 6 7 9 5v4z" fill="#0fd14a" stroke="#111"/><circle cx="19" cy="5" r="3" fill="#f6e71a"/><path d="M19 0v10M14 5h10M15 1l8 8M23 1l-8 8" stroke="#f6e71a"/></symbol>
<symbol id="pf" viewBox="0 0 24 24"><path d="M1 22l10-5 6-3 6-6" fill="none" stroke="#5b86b5" stroke-width="2"/><path d="M7 18V8l-4-1 4-2M20 10V2l-4 2 4 1" fill="#f2d44f" stroke="#666"/></symbol>
<symbol id="an" viewBox="0 0 24 24"><circle cx="12" cy="5" r="4.500" fill="#2a76ba"/><circle cx="5" cy="18" r="4.500" fill="#2a76ba"/><circle cx="19" cy="18" r="4.500" fill="#2a76ba"/><path d="M12 5l-7 13M12 5l7 13" stroke="#2a76ba" stroke-width="3"/></symbol>
<symbol id="ffl" viewBox="0 0 24 24"><path d="M20 1c0 8-3 12-7 14L8 13z" fill="#bbb"/><ellipse cx="12" cy="16" rx="10" ry="4" fill="#4b8a3a"/><circle cx="12" cy="13" r="6.500" fill="#b83a40"/></symbol>
<symbol id="tl" viewBox="0 0 24 24"><path d="M3 2l20 20M3 22L20 6" stroke="#2a76ba" stroke-width="4"/><circle cx="19" cy="5" r="4" fill="none" stroke="#2a76ba" stroke-width="2.500"/></symbol>
<symbol id="bug" viewBox="0 0 24 24"><rect x="1" y="1" width="18" height="22" fill="#fff" stroke="#111" stroke-width="2"/><path d="M4 6h2M8 6h8M4 10h2M8 10h8M4 14h2" stroke="#111"/><ellipse cx="17" cy="17" rx="5" ry="6" fill="#222"/><path d="M11 14l12 6M11 20l12-6" stroke="#111"/></symbol>
<symbol id="tq" viewBox="0 0 24 24"><rect x="2" y="1" width="20" height="22" fill="#e8f0f8" stroke="#5b86b5"/><path d="M2 5h20" stroke="#5b86b5" stroke-width="3"/><path d="M5 9h14M5 13h5" stroke="#5b86b5"/><circle cx="14" cy="15" r="5" fill="#fff" stroke="#111" stroke-width="1.500"/><path d="M18 19l4 4" stroke="#111" stroke-width="2"/></symbol>
<symbol id="nw" viewBox="0 0 24 24"><path d="M12 3L7 10l6 5-8 6M12 3l6 7-5 5 6 6M7 10H2M18 10h4" fill="none" stroke="#3a86c8"/><g fill="#fff" stroke="#3a86c8"><circle cx="12" cy="3" r="2"/><circle cx="7" cy="10" r="2"/><circle cx="18" cy="10" r="2"/><circle cx="13" cy="15" r="2"/><circle cx="5" cy="21" r="2"/><circle cx="19" cy="21" r="2"/></g></symbol>
<symbol id="sz" viewBox="0 0 24 24"><path d="M1 23V9l4 4L17 1l7 7-12 11 4 4z" fill="#f09a14" stroke="#a86a00"/><path d="M7 15L18 5" stroke="#000" stroke-width="2" stroke-dasharray="1.500 1"/></symbol>
<symbol id="rbt" viewBox="0 0 24 24"><rect x="2" y="7" width="11" height="16" rx="2" fill="#6fa0d0" stroke="#234"/><circle cx="5.500" cy="12" r="1.500"/><circle cx="9.500" cy="12" r="1.500"/><path d="M4 17h7M4 20h7" stroke="#234"/><path d="M7 7V2" stroke="#234"/><rect x="15" y="2" width="6" height="21" fill="#ccd" stroke="#234"/></symbol>
<symbol id="cv" viewBox="0 0 24 24"><path d="M4 5c9 0 14 6 16 16" fill="none" stroke="#aaa" stroke-width="2"/><circle cx="5" cy="5" r="3" fill="#999"/><circle cx="20" cy="20" r="3" fill="#999"/></symbol>
<symbol id="hh" viewBox="0 0 24 24"><rect x="2" y="1" width="20" height="22" fill="#bbb"/><path d="M3 4l6 3 7-4 5 6M3 11c4 3 8-3 12 1s4 2 6 3M4 18l6-2 5 5 6-4" fill="none" stroke="#eee"/></symbol>
<symbol id="wr" viewBox="0 0 24 24"><rect width="24" height="24" fill="#fff"/><rect x="1" y="9" width="11" height="11" fill="#fff" stroke="#aaa"/><rect x="10" y="4" width="11" height="11" fill="#fff" stroke="#aaa"/><circle cx="6" cy="15" r="2" fill="#e01515"/><circle cx="14" cy="8" r="1.500" fill="#e01515"/><circle cx="17" cy="11" r="1.500" fill="#e01515"/><circle cx="13" cy="13" r="1.500" fill="#e01515"/></symbol>
<symbol id="d1" viewBox="0 0 24 24"><rect x="5" y="2" width="13" height="18" fill="#fff" stroke="#888"/><path d="M7 8h8M7 11h8M7 14h8" stroke="#555"/><circle cx="4" cy="21" r="2.500" fill="#7ba26f" stroke="#555"/><circle cx="21" cy="9" r="2.500" fill="#7ba26f" stroke="#555"/></symbol>
<symbol id="d2" viewBox="0 0 24 24"><rect x="5" y="2" width="15" height="21" fill="#f5efe4" stroke="#c49a5e" stroke-width="1.500"/><rect x="9" y="1" width="7" height="4" fill="#ddd" stroke="#888"/><path d="M7 9l5 11 6-12M6 11h14" fill="none" stroke="#567"/></symbol>
<symbol id="d3" viewBox="0 0 24 24"><rect x="7" y="2" width="15" height="21" fill="#f5efe4" stroke="#c49a5e" stroke-width="1.500"/><rect x="11" y="1" width="7" height="4" fill="#ddd" stroke="#888"/><path d="M2 9l7 11 8-12M3 12h16" fill="none" stroke="#456"/></symbol>
<symbol id="va" viewBox="0 0 24 24"><path d="M3 2l5 15 5-15 7 0" fill="none" stroke="#44586c" stroke-width="1.500"/><g fill="#fff" stroke="#44586c"><circle cx="3" cy="2" r="1.800"/><circle cx="8" cy="17" r="1.800"/><circle cx="13" cy="2" r="1.800"/><circle cx="20" cy="2" r="1.800"/></g><use href="#pl"/></symbol>
<symbol id="ra" viewBox="0 0 24 24"><rect x="1" y="0" width="19" height="19" fill="#9db8d4"/><path d="M1 0h6v6H1zM14 0h6v6h-6zM7 6h7v6H7zM1 12h6v7H1z" fill="#234a78"/><use href="#pl"/></symbol>
<symbol id="fe" viewBox="0 0 24 24"><path d="M2 23C4 12 10 3 22 0c-1 9-6 14-13 16z" fill="#7ba0c7" stroke="#44586c"/><path d="M2 23L16 6" stroke="#fff"/><use href="#pl"/></symbol>
<symbol id="el" viewBox="0 0 24 24"><path d="M2 7c0-4 4-6 8-6s8 0 10 3c2 2 0 7-2 9-1 2-1 5-3 5s-1-3-3-3-2 2-3 1-1-5-3-6-4 0-4-3z" fill="#5c84ad" stroke="#284d72"/><use href="#pl"/></symbol>
<symbol id="wm" viewBox="0 0 24 24"><circle cx="10" cy="9" r="9.500" fill="#8fb0cf" stroke="#4f7397"/><path d="M5 7h4v2H5zM12 4h5v2h-5zM11 10h3v4h-3z" fill="#234a78"/><use href="#pl"/></symbol>
<symbol id="wc" viewBox="0 0 24 24"><circle cx="10" cy="9" r="9.500" fill="#1f4a78"/><path d="M1 9h18M3 5h14M3 13h14M10 0c-4 5-4 13 0 19M10 0c4 5 4 13 0 19" stroke="#fff"/><use href="#pl"/></symbol>
<symbol id="wf" viewBox="0 0 24 24"><circle cx="10" cy="9" r="9.500" fill="#ddeaf5" stroke="#7298bd"/><path d="M4 4l4 12 5-12 5 0" stroke="#333" fill="none"/><circle cx="5" cy="17" r="4" fill="#216a3d"/><use href="#pl"/></symbol>
<symbol id="cm2" viewBox="0 0 24 24"><path d="M5 1c6-2 8 3 6 7s-3 6 1 9c-4 1-7-2-5-6s3-5 1-7-5 0-3-3z" fill="#234a78"/><use href="#pl"/></symbol>
<symbol id="vb" viewBox="0 0 24 24"><rect x="1" y="1" width="20" height="18" rx="2" fill="#b8cfe4" stroke="#7298bd"/><path d="M4 3l5 12 5-12 5 0" stroke="#44586c" fill="none" stroke-width="1.500"/><use href="#pl"/></symbol>
<symbol id="vst" viewBox="0 0 24 24"><path d="M3 2l5 15 5-15 7 0" fill="none" stroke="#44586c" stroke-width="1.500"/><g fill="#fff" stroke="#44586c"><circle cx="3" cy="2" r="1.800"/><circle cx="8" cy="17" r="1.800"/><circle cx="13" cy="2" r="1.800"/><circle cx="20" cy="2" r="1.800"/></g><use href="#ys"/></symbol>
<symbol id="gd" viewBox="0 0 24 24"><path d="M5 1h9l5 4v17H5z" fill="#7dc34d"/><rect x="14" y="15" width="10" height="9" fill="#8ab07a"/><path d="M19 16v7M15.500 19.500h7" stroke="#fff" stroke-width="1.500"/></symbol>
<symbol id="tr1" viewBox="0 0 24 24"><path d="M12 1v22M1 12h22" stroke="#666"/><circle cx="12" cy="12" r="4.500" fill="none" stroke="#d04040" stroke-dasharray="2 2"/></symbol>
<symbol id="cmp" viewBox="0 0 24 24"><path d="M8 2a3 3 0 013 0M10 5C4 8 4 16 10 21M10 5c3 0 3 5 3 5" fill="none" stroke="#333" stroke-width="1.400"/><circle cx="10" cy="3" r="2" fill="#fff" stroke="#333"/><rect x="12" y="12" width="12" height="11" rx="1" fill="#44708f"/><path d="M15 15h3l2 2.500-2 2.500h-3z" fill="#fff"/></symbol>
<symbol id="ov1" viewBox="0 0 24 24"><path d="M10 2h10l2 8-10 10z" fill="none" stroke="#d02020" stroke-width="1.200"/><path d="M2 3l6 19" stroke="#2a76ba" stroke-width="1.500"/><g fill="#2a76ba"><circle cx="2" cy="3" r="1.500"/><circle cx="8" cy="22" r="1.500"/></g></symbol>
<symbol id="ov2" viewBox="0 0 24 24"><path d="M5 5c8-5 15-2 16 1s-8 3-9 10-6 4-7-1-3-7 0-10z" fill="#3a73aa"/><g fill="#f2d44f" stroke="#333"><circle cx="4" cy="5" r="2"/><circle cx="21" cy="3" r="2"/><circle cx="3" cy="20" r="2"/></g><path d="M14 17l3 4 6-9" fill="none" stroke="#f2d44f" stroke-width="2.500"/></symbol>
<symbol id="c1" viewBox="0 0 24 24"><use href="#cmo"/><path d="M16 0l6 3-3 5-5-3z" fill="#d94040"/></symbol>
<symbol id="c2" viewBox="0 0 24 24"><use href="#cmo"/><path d="M8 14l7 6-4 4-6-6z" fill="#ccc" stroke="#888"/></symbol>
<symbol id="c3" viewBox="0 0 24 24"><use href="#cmo"/><rect x="15" y="17" width="9" height="7" fill="#44708f"/></symbol>
<symbol id="tbr2" viewBox="0 0 24 24"><rect x="2" y="2" width="20" height="20" fill="#eef4fa" stroke="#7298bd"/><path d="M2 6h20M2 12h20M2 18h20M9 2v20M16 2v20" stroke="#e8c43c"/><path d="M5 14a6 6 0 0112-3l3-2v7h-6l2-2a3 3 0 00-6 0z" fill="#3aa04a"/><path d="M19 15a6 6 0 01-12 3l-2 2v-6h6l-2 2a3 3 0 006-1z" fill="#3aa04a"/></symbol>
<symbol id="frm" viewBox="0 0 24 24"><rect x="1" y="3" width="22" height="19" fill="#fff" stroke="#8fa9c4"/><rect x="1" y="3" width="22" height="3" fill="#7298bd"/><path d="M4 10h12M4 13h8M4 17h14" stroke="#d04040"/><path d="M8 15L22 4l2 2-13 11z" fill="#f09a14"/></symbol>
<symbol id="brs" viewBox="0 0 24 24"><path d="M12 12l10-10 2 2-9 12z" fill="#d9a84e"/><path d="M2 14l9-2 5 5-6 4z" fill="#e5a82e"/><path d="M2 14l4-1 3 7-2 1z" fill="#d04040"/><path d="M6 13l3-1 3 6-3 2z" fill="#4d7ab0"/></symbol>
<symbol id="ad" viewBox="0 0 24 24"><rect x="3" y="7" width="12" height="15" fill="#fff" stroke="#888"/><rect x="7" y="3" width="8" height="14" fill="#eee" stroke="#888"/><rect x="12" y="13" width="10" height="10" rx="2" fill="#8fba87"/><path d="M17 15v6M14 18h6" stroke="#fff"/></symbol>
<symbol id="ey" viewBox="0 0 24 24"><path d="M1 9c6-8 16-6 21 1-6 8-15 8-21-1z" fill="#dfe9f3" stroke="#888"/><circle cx="11" cy="10" r="5" fill="#4a80b5"/><circle cx="11" cy="10" r="2" fill="#111"/><path d="M15 18h9l-4.500 5z"/></symbol>
<symbol id="fu" viewBox="0 0 24 24"><path d="M2 3h20v3l-7 7v9l-6-2v-7L2 6z" fill="#5c8fc2" stroke="#4a72a0"/><path d="M2 3h20" stroke="#f2d44f" stroke-width="3"/></symbol>
<symbol id="exd" viewBox="0 0 24 24"><rect x="2" y="3" width="11" height="19" fill="#eee" stroke="#999"/><rect x="5" y="9" width="3" height="3" fill="#e08a2e"/><rect x="5" y="15" width="3" height="3" fill="#e08a2e"/><path d="M16 2h5v12h3l-5.500 8L13 14h3z" fill="#5c8fc2"/></symbol>
<symbol id="cod" viewBox="0 0 24 24"><rect x="2" y="3" width="11" height="19" fill="#eee" stroke="#999"/><rect x="5" y="9" width="3" height="3" fill="#e08a2e"/><rect x="5" y="15" width="3" height="3" fill="#e08a2e"/><path d="M16 22h5V10h3L18.500 2 13 10h3z" fill="#5c8fc2"/></symbol>
<symbol id="rml" viewBox="0 0 24 24"><rect x="2" y="3" width="17" height="17" fill="#fff" stroke="#888"/><rect x="13" y="15" width="11" height="7" fill="#d84a4a"/><path d="M15 18.500h7" stroke="#fff" stroke-width="2"/></symbol>
<symbol id="adl" viewBox="0 0 24 24"><rect x="2" y="3" width="17" height="17" fill="#fff" stroke="#888"/><rect x="13" y="14" width="10" height="9" fill="#6c9e5c"/><circle cx="18" cy="18.500" r="2" fill="#ddd"/></symbol>
<symbol id="inf" viewBox="0 0 24 24"><circle cx="12" cy="12" r="11" fill="#6f99c6"/><path d="M13 5v2M10 11h3l-1 8" stroke="#fff" stroke-width="2.500" fill="none"/></symbol>
<symbol id="xm" viewBox="0 0 24 24"><path d="M5 5l14 14M19 5L5 19" stroke="#000" stroke-width="5"/></symbol>
<symbol id="fd" viewBox="0 0 24 24"><path d="M3 1h18v18l-6 4H3z" fill="#f8e29a" stroke="#e8c860"/><path d="M15 23v-4h6" fill="#f2cc5c" stroke="#e8b830"/></symbol>
<symbol id="mss" viewBox="0 0 24 24"><path d="M1 1c8 1 16 3 22 10-6 5-14 10-22 12 5-7 5-15 0-22z" fill="#5c84ad" stroke="#284d72"/><path d="M6 3c3 6 3 12 0 18M12 6c2 4 2 8 0 11" stroke="#1f4a78" fill="none"/></symbol>
<symbol id="pgs" viewBox="0 0 24 24"><path d="M1 7c0-4 4-6 9-6s9 0 11 3c2 3 0 8-2 10-1 3-1 8-3 8s-1-5-3-5-3 2-4 1-1-6-3-7-5 0-5-4z" fill="#5c84ad" stroke="#284d72"/></symbol>
<symbol id="spl" viewBox="0 0 24 24"><path d="M1 23C3 12 10 3 23 0c-1 9-6 15-14 17z" fill="#7ba0c7" stroke="#44586c"/><path d="M1 23L17 6" stroke="#fff"/></symbol>
<symbol id="afs" viewBox="0 0 24 24"><circle cx="12" cy="12" r="11" fill="#ddeaf5" stroke="#7298bd"/><path d="M6 3l4 12 5-12 5 0" stroke="#333" fill="none"/><circle cx="5" cy="19" r="5" fill="#216a3d"/></symbol>
<symbol id="ams" viewBox="0 0 24 24"><circle cx="12" cy="12" r="11" fill="#88a8c8" stroke="#5f86ab"/><path d="M6 7h5v3H6zM14 4h5v3h-5zM14 11h4v5h-4z" fill="#eef"/><circle cx="5" cy="19" r="5" fill="#216a3d"/></symbol>
<symbol id="ows" viewBox="0 0 24 24"><circle cx="12" cy="12" r="11" fill="#f2f6fa" stroke="#7298bd"/><path d="M1 12h22M3 7h18M3 17h18M12 1c-6 6-6 16 0 22M12 1c6 6 6 16 0 22" stroke="#a8c0d8" fill="none"/></symbol>
<symbol id="xyz" viewBox="0 0 24 24"><circle cx="12" cy="12" r="11" fill="#88a8c8" stroke="#5f86ab"/><path d="M5 8h5v3H5zM14 5h5v3h-5zM13 12h5v5h-5zM6 14h3v3H6z" fill="#eef"/></symbol>
<symbol id="wcs" viewBox="0 0 24 24"><circle cx="12" cy="12" r="11" fill="#1f4a78"/><path d="M1 12h22M3 7h18M3 17h18M12 1c-6 6-6 16 0 22M12 1c6 6 6 16 0 22" stroke="#fff" fill="none"/></symbol>
<symbol id="wfs" viewBox="0 0 24 24"><circle cx="12" cy="12" r="11" fill="#ddeaf5" stroke="#7298bd"/><path d="M5 4l6 15 4-15h5" stroke="#333" fill="none"/></symbol>
<symbol id="yg" viewBox="0 0 24 24"><path d="M3 10c-3 4-2 11 7 13V15z" fill="#8ccc3f" stroke="#555" stroke-width=".5"/><path d="M21 10c3 4 2 11-7 13V15z" fill="#f2d44f" stroke="#555" stroke-width=".5"/><path d="M5 4c3-3 11-3 14 0l-7 9z" fill="#e02020"/></symbol>
<symbol id="cfg" viewBox="0 0 24 24"><path d="M10 2l9 9-9 9-9-9z" fill="#5b86a8" stroke="#345"/><path d="M10 6l5 5-5 5-5-5z" fill="#9cb8d0"/><rect x="14" y="12" width="9" height="10" fill="#f2d44f" stroke="#b8971a"/></symbol>
<symbol id="hie" viewBox="0 0 24 24"><rect x="7" y="1" width="10" height="8" fill="#d84a4a"/><path d="M12 9v4M5 13h14M5 13v4M19 13v4" stroke="#d9a84e" stroke-width="2"/><rect x="1" y="15" width="9" height="8" fill="#f2d44f"/><rect x="14" y="15" width="9" height="8" fill="#6fa0d0"/></symbol>
<symbol id="und" viewBox="0 0 24 24"><path d="M12 4L2 12l10 7v-4c5 0 7 2 8 7 3-9-1-15-8-15z" fill="#e8873e"/></symbol>
<symbol id="red" viewBox="0 0 24 24"><path d="M12 4l10 8-10 7v-4c-5 0-7 2-8 7-3-9 1-15 8-15z" fill="#6fb07a"/></symbol>
<symbol id="ur" viewBox="0 0 24 24"><path d="M10 1L3 7l7 6v-3c5 0 7 1 8 4 1-6-2-9-8-9z" fill="#6fb07a"/><path d="M14 11l7 6-7 6v-3c-4 0-6 1-7 3-1-6 2-9 7-9z" fill="#e8873e"/></symbol>
<symbol id="tsh" viewBox="0 0 24 24"><path d="M3 2h18c1 8 0 17-9 21C3 19 2 10 3 2z" fill="#204d8c"/><path d="M3 2h18v6H3z" fill="#d02525"/></symbol>
<symbol id="tsw" viewBox="0 0 24 24"><path d="M3 2h18c1 8 0 17-9 21C3 19 2 10 3 2z" fill="#e8effa" stroke="#8ea2c0"/><path d="M21 9c0 6-3 12-9 14 6 1 12-7 10-14z" fill="#333"/></symbol>
<symbol id="tmv" viewBox="0 0 24 24"><path d="M12 1l4 4-4 4-4-4zM12 15l4 4-4 4-4-4zM1 12l4-4 4 4-4 4zM15 12l4-4 4 4-4 4z" fill="#6c8ba8"/></symbol>
<symbol id="tbp" viewBox="0 0 24 24"><path d="M22 2c-2 7-6 12-9 14L8 23c0-5 2-9 6-12 3-2 6-6 8-9z" fill="#7a7a7a"/></symbol>
<symbol id="wch" viewBox="0 0 24 24"><path d="M2 5a5 5 0 007 6L21 23l3-3L12 8A5 5 0 006 2l3 3-2 3z" fill="#999" stroke="#666" stroke-width=".5"/><path d="M14 12l10 11h-5l-8-8z" fill="#d9b02e"/></symbol>
<symbol id="dp" viewBox="0 0 24 20"><path d="M1 9l5-8h12v16H6z" fill="#efefef" stroke="#777"/><path d="M8 5h8M8 9h8M8 13h5" stroke="#555"/><path d="M14 14h10l-5 5z"/></symbol>
<symbol id="dpg" viewBox="0 0 24 20"><path d="M1 9l5-8h12v16H6z" fill="#efefef" stroke="#aaa"/><path d="M8 5h8M8 9h8M8 13h5" stroke="#aaa"/><path d="M14 14h10l-5 5z" fill="#aaa"/></symbol>
<symbol id="flw" viewBox="0 0 24 24"><path d="M1 1h22v4l-8 8v10l-6-3v-7L1 5z" fill="#7ba7cf" stroke="#4a72a0"/><path d="M1 1h22" stroke="#f2d44f" stroke-width="3"/></symbol>
<symbol id="vtr" viewBox="0 0 24 24"><rect x="4" y="2" width="16" height="21" rx="2" fill="#e0edf8" stroke="#7298bd"/><rect x="7" y="5" width="4" height="4" fill="#7298bd"/><rect x="7" y="14" width="4" height="4" fill="#7298bd"/><path d="M13 7h4M13 16h4" stroke="#7298bd"/></symbol>
<symbol id="vtb" viewBox="0 0 24 24"><rect x="4" y="2" width="16" height="21" rx="1" fill="#cfe2f3" stroke="#7298bd"/><path d="M4 7h16M4 12h16M4 17h16M10 7v16" stroke="#5b86b5"/></symbol>
<symbol id="scl" viewBox="0 0 24 24"><path d="M8 1l8 20M16 1L8 21" stroke="#333" stroke-width="4"/><ellipse cx="12" cy="16" rx="7" ry="6" fill="none" stroke="#333" stroke-width="2"/></symbol>
<symbol id="lck" viewBox="0 0 24 24"><path d="M7 11V6a5 5 0 0110 0v5" fill="none" stroke="#888" stroke-width="2"/><rect x="4" y="11" width="16" height="12" rx="1" fill="#666"/></symbol>
<symbol id="gbl" viewBox="0 0 24 24"><circle cx="12" cy="12" r="10" fill="#e0e0e0" stroke="#777" stroke-width="2"/><path d="M2 12h20M12 2c-6 6-6 14 0 20M12 2c6 6 6 14 0 20" stroke="#777" fill="none"/></symbol>
<symbol id="msg" viewBox="0 0 24 24"><path d="M12 2c6 0 10 4 10 9s-4 9-9 9l3 4c-5-1-8-3-10-5-3-2-4-5-4-8 0-5 4-9 10-9z" fill="#666"/><circle cx="7" cy="11" r="1.500" fill="#fff"/><circle cx="12" cy="11" r="1.500" fill="#fff"/><circle cx="17" cy="11" r="1.500" fill="#fff"/></symbol>
</svg>

<div class="ttl d-flex align-items-center"><svg width="17" height="20" viewBox="0 0 24 24"><path d="M4 22C4 12 10 3 20 1c1 8-3 17-16 21z" fill="#a8c94a"/><path d="M5 22L18 4" stroke="#333" stroke-width="1.500"/><path d="M6 8l6 2-5 6z" fill="#4a5ab0"/><path d="M16 17l4 5-7-1z" fill="#f2d44f"/></svg><span class="ms-1">QGIS 2.18.22</span>
<svg class="wc w1" viewBox="0 0 16 16"><path d="M2 8h12" stroke="#111"/></svg><svg class="wc w2" viewBox="0 0 16 16"><path d="M2.500 5.500h8v8h-8zM5 5.500V2.500h8.500v8h-3" fill="none" stroke="#111"/></svg><svg class="wc w3" viewBox="0 0 16 16"><path d="M2 2l12 12M14 2L2 14" stroke="#111"/></svg></div>
<nav class="qm d-flex align-items-start"><span class="mi on">Progetto</span><span class="mi"><u>M</u>odifica</span><span class="mi"><u>V</u>isualizza</span><span class="mi"><u>L</u>ayer</span><span class="mi"><u>I</u>mpostazioni</span><span class="mi"><u>P</u>lugins</span><span class="mi">Vett<u>o</u>re</span><span class="mi"><u>R</u>aster</span><span class="mi"><u>D</u>atabase</span><span class="mi"><u>W</u>eb</span><span class="mi"><u>L</u>ocation Lab</span><span class="mi">MMQGIS</span><span class="mi">Pro<u>c</u>essing</span><span class="mi"><u>G</u>uida</span></nav>

<div class="tbr"><i class="gr f"></i><svg class="ic"><use href="#n"/></svg><svg class="ic"><use href="#o"/></svg><svg class="ic"><use href="#s"/></svg><svg class="ic"><use href="#sa"/></svg><svg class="ic"><use href="#np"/></svg><svg class="ic"><use href="#cm"/></svg><i class="gr"></i><svg class="ic act"><use href="#tp"/></svg><svg class="ic"><use href="#h"/></svg><svg class="ic"><use href="#ps"/></svg><svg class="ic"><use href="#zi"/></svg><svg class="ic"><use href="#zo"/></svg><svg class="ic" viewBox="0 0 24 24"><circle cx="15" cy="9" r="8" fill="#f4f4f4" stroke="#aaa"/><path d="M9 15l-7 7" stroke="#bbb" stroke-width="3"/><text x="15" y="12" font-size="7" font-weight="700" text-anchor="middle" fill="#888">1:1</text></svg><svg class="ic"><use href="#zf"/></svg><svg class="ic"><use href="#zs"/></svg><svg class="ic"><use href="#zl"/></svg><svg class="ic"><use href="#zp"/></svg><svg class="ic"><use href="#zn"/></svg><svg class="ic"><use href="#bk"/></svg><svg class="ic"><use href="#bm"/></svg><svg class="ic"><use href="#rf"/></svg><svg class="ic"><use href="#pt"/></svg><i class="gr m18"></i><svg class="ic"><use href="#id"/></svg><svg class="ic"><use href="#ac"/></svg><i class="ar g"></i><svg class="ic"><use href="#sl"/></svg><i class="ar"></i><svg class="ic" viewBox="0 0 24 24"><rect x="8" y="9" width="14" height="14" fill="#f5dc4a" stroke="#b89a10"/><text x="1" y="16" font-size="21" font-family="Liberation Serif,serif" fill="#7a3f83">ε</text></svg><i class="ar"></i><svg class="ic"><use href="#ds"/></svg><svg class="ic"><use href="#tb"/></svg><svg class="ic"><use href="#ab"/></svg><svg class="ic" viewBox="0 0 24 24"><text x="12" y="21" font-size="26" font-weight="700" text-anchor="middle" font-family="Liberation Sans,sans-serif" fill="#a020a0">Σ</text></svg><svg class="ic"><use href="#ms"/></svg><i class="ar"></i><svg class="ic"><use href="#bl"/></svg><svg class="ic" viewBox="0 0 24 24"><path d="M2 2h20v15H9l-6 6 1-6H2z" fill="#eef3f7" stroke="#777"/><text x="12" y="14" font-size="13" font-family="Liberation Serif,serif" text-anchor="middle" fill="#333">T</text></svg><i class="ar"></i><i class="gr"></i><svg class="ic" viewBox="0 0 24 24"><rect x="2" y="1" width="21" height="22" rx="1" fill="#5d8fc2"/><rect x="2" y="1" width="4" height="22" fill="#222"/><text x="14" y="18" font-size="15" fill="#fff" text-anchor="middle" font-weight="700">?</text></svg><i class="gr"></i><svg class="ic"><use href="#rq"/></svg><i class="gr m28"></i><svg class="ic"><use href="#tt"/></svg><i class="gr m20"></i><svg class="ic"><use href="#ge"/></svg><i class="gr m9"></i><svg class="ic"><use href="#yy"/></svg><i class="gr m9"></i><svg class="ic"><use href="#cls"/></svg><i class="gr m9"></i><svg class="ic"><use href="#gbf"/></svg></div>

<div class="tbr"><i class="gr f"></i><svg class="ic"><use href="#gp"/></svg><svg class="ic"><use href="#pc"/></svg><svg class="ic"><use href="#sv2"/></svg><svg class="ic"><use href="#bs"/></svg><svg class="ic"><use href="#nd"/></svg><i class="ar g"></i><svg class="ic"><use href="#mv"/></svg><svg class="ic"><use href="#nt"/></svg><svg class="ic"><use href="#tr"/></svg><svg class="ic"><use href="#sc"/></svg><svg class="ic"><use href="#cp"/></svg><svg class="ic"><use href="#pa"/></svg><i class="gr"></i><svg class="ic"><use href="#tru"/></svg><svg class="ic"><use href="#mag"/></svg><svg class="ic"><use href="#un"/></svg><svg class="ic"><use href="#bu"/></svg><svg class="ic"><use href="#hx"/></svg><svg class="ic"><use href="#rg"/></svg><svg class="ic"><use href="#bs"/></svg><svg class="ic"><use href="#rg"/></svg><svg class="ic"><use href="#rx"/></svg><svg class="ic"><use href="#rx"/></svg><svg class="ic"><use href="#lf"/></svg><svg class="ic"><use href="#bn"/></svg><svg class="ic"><use href="#sb"/></svg><svg class="ic"><use href="#sb"/></svg><svg class="ic"><use href="#rs"/></svg><svg class="ic"><use href="#ls"/></svg><svg class="ic"><use href="#ro"/></svg><i class="ar g"></i><i class="gr"></i><div class="qi cmb1 justify-content-end" role="presentation"><svg width="24" height="18"><use href="#ers"/></svg></div><svg class="ic"><use href="#mgb"/></svg><i class="gr"></i><svg class="ic"><use href="#gg"/></svg><svg class="ic"><use href="#gmp"/></svg><svg class="ic"><use href="#bk2"/></svg><svg class="ic"><use href="#gl1"/></svg><svg class="ic"><use href="#gl2"/></svg><i class="gr"></i><svg class="ic"><use href="#gm2"/></svg></div>

<div class="tbr"><i class="gr f"></i><svg class="ic"><use href="#sb"/></svg><i class="ar g"></i><svg class="ic"><use href="#sb"/></svg><svg class="ic"><use href="#sb"/></svg><svg class="ic"><use href="#rs"/></svg><svg class="ic"><use href="#bu"/></svg><svg class="ic"><use href="#lf"/></svg><svg class="ic"><use href="#hx"/></svg><svg class="ic"><use href="#rg"/></svg><i class="ar g"></i><svg class="ic"><use href="#rg"/></svg><i class="ar g"></i><svg class="ic"><use href="#bs"/></svg><svg class="ic"><use href="#hx"/></svg><svg class="ic"><use href="#nt"/></svg><i class="ar g"></i><svg class="ic"><use href="#bwh"/></svg><svg class="ic"><use href="#bwh"/></svg><svg class="ic"><use href="#bwh"/></svg><svg class="ic"><use href="#hx"/></svg><i class="gr"></i><i class="gr m21"></i><svg class="ic" viewBox="0 0 24 24"><rect x="3" y="1" width="13" height="20" fill="#f4d86a" stroke="#888"/><path d="M3 6h13M3 11h13M3 16h13M9 1v20" stroke="#888"/><circle cx="16" cy="17" r="6" fill="#4ba14b"/><path d="M12 17a4 4 0 017-2M20 17a4 4 0 01-7 2" stroke="#fff" fill="none" stroke-width="1.500"/><text x="17" y="10" font-size="12" fill="#7a3f83" font-family="Liberation Serif,serif">ε</text></svg><svg class="ic" viewBox="0 0 24 24"><path d="M12 1l7 7h-4v6H9V8H5z" fill="#4d9ac4"/><path d="M12 20a4 4 0 018-2M21 19a4 4 0 01-8 2" stroke="#4ba14b" stroke-width="2" fill="none"/><text x="3" y="23" font-size="11" fill="#7a3f83" font-family="Liberation Serif,serif">ε</text></svg><svg class="ic" viewBox="0 0 24 24"><path d="M12 14l7-7h-4V1H9v6H5z" fill="#4d9ac4"/><path d="M12 20a4 4 0 018-2M21 19a4 4 0 01-8 2" stroke="#4ba14b" stroke-width="2" fill="none"/><text x="3" y="23" font-size="11" fill="#7a3f83" font-family="Liberation Serif,serif">ε</text></svg><i class="gr m30"></i><svg class="ic"><use href="#hxr"/></svg><i class="gr m14"></i><svg class="ic"><use href="#sp"/></svg>
<div class="qi inp sa2">0,000<span class="sp2"></span></div><div class="qc inp ms-1 sb2 ps-1">m<span class="ca"></span></div><span class="cb ms-1"></span><span class="ms-2 ltxt w88">Use centroid</span><i class="gr m48"></i><svg class="ic"><use href="#rp1"/></svg><svg class="ic"><use href="#rp2"/></svg><svg class="ic"><use href="#rb"/></svg><svg class="ic"><use href="#er"/></svg><svg class="ic"><use href="#xr"/></svg><svg class="ic"><use href="#cmr"/></svg><svg class="ic"><use href="#bkr"/></svg><svg class="ic"><use href="#imp"/></svg><svg class="ic"><use href="#exq"/></svg><i class="gr m11"></i><svg class="ic"><use href="#dtr"/></svg><i class="gr m21"></i><svg class="ic"><use href="#dsk"/></svg><i class="gr"></i><svg class="ic" viewBox="0 0 24 24"><rect x="3" y="1" width="18" height="22" rx="3" fill="#333"/><text x="12" y="18" font-size="17" font-weight="700" text-anchor="middle" fill="#d5d51e">S</text></svg></div>

<div class="tbr l"><i class="gr f"></i><svg class="ic"><use href="#py"/></svg><svg class="ic" viewBox="0 0 24 24"><rect width="24" height="24" fill="#fff"/><text x="12" y="18" font-size="16" font-weight="700" text-anchor="middle" fill="#19a5e0">AC</text></svg><svg class="ic"><use href="#pk"/></svg><svg class="ic" viewBox="0 0 24 24"><rect width="24" height="24" fill="#fff"/><path d="M2 14l8 0-3 8z" fill="#c01818"/><text x="12" y="11" font-size="11" text-anchor="middle" font-family="Liberation Sans,sans-serif" fill="#111">CXF</text><text x="18" y="22" font-size="9" text-anchor="middle" font-family="Liberation Sans,sans-serif" fill="#111">IN</text></svg><svg class="ic"><use href="#ln"/></svg><i class="ar g"></i><svg class="ic"><use href="#ri"/></svg><svg class="ic"><use href="#kg"/></svg><svg class="ic"><use href="#pm"/></svg><svg class="ic"><use href="#rd"/></svg><svg class="ic"><use href="#gnb"/></svg><svg class="ic"><use href="#lfk"/></svg><svg class="ic"><use href="#sta"/></svg><svg class="ic"><use href="#nm"/></svg><svg class="ic"><use href="#gy"/></svg><i class="ar"></i><svg class="ic"><use href="#hl"/></svg><svg class="ic"><use href="#pf"/></svg><svg class="ic"><use href="#an"/></svg><svg class="ic" viewBox="0 0 24 24"><path d="M16 5h8M20 1v8" stroke="#333" stroke-width="2"/><text x="0" y="21" font-size="27" font-family="Liberation Serif,serif" fill="#633a6e">ε</text></svg><svg class="ic"><use href="#ffl"/></svg><svg class="ic" viewBox="0 0 24 24"><ellipse cx="12" cy="12" rx="12" ry="12" fill="#f26a1b"/><text x="12" y="16" font-size="10" font-weight="700" text-anchor="middle" fill="#f8e0c8">Ref</text></svg><svg class="ic"><use href="#tl"/></svg><i class="ar"></i><svg class="ic"><use href="#bug"/></svg><svg class="ic"><use href="#tq"/></svg><span class="m9 ltxt">Selection Sets</span><svg class="ic m7"><use href="#nw"/></svg><svg class="ic"><use href="#sz"/></svg><svg class="ic"><use href="#id"/></svg><svg class="ic"><use href="#rbt"/></svg><svg class="ic" viewBox="0 0 24 24"><rect width="24" height="24" fill="#cfcfc8"/><rect x="4" y="1" width="16" height="22" fill="#5b86b5"/><text x="1" y="11" font-size="12" font-weight="700" fill="#000">W</text><text x="9" y="18" font-size="13" font-weight="700" fill="#e01515">K</text><text x="15" y="23" font-size="11" font-weight="700" fill="#000">T</text></svg><i class="gr m63"></i><svg class="ic"><use href="#cv"/></svg><i class="gr m18"></i><svg class="ic"><use href="#hh"/></svg><i class="gr m23"></i><i class="gr m20"></i><svg class="ic"><use href="#wr"/></svg><i class="gr m48"></i><svg class="ic"><use href="#d1"/></svg><svg class="ic"><use href="#d2"/></svg><svg class="ic"><use href="#d3"/></svg></div>

<main class="mn d-flex">
<aside class="lt">
<div class="hgl"></div>
<div class="rw"><svg class="ic"><use href="#va"/></svg></div><div class="rw"><svg class="ic"><use href="#ra"/></svg></div><div class="rw"><svg class="ic"><use href="#fe"/></svg></div><div class="rw"><svg class="ic"><use href="#el"/></svg><i class="ar"></i></div><div class="rw"><svg class="ic"><use href="#wm"/></svg><i class="ar"></i></div><div class="rw"><svg class="ic"><use href="#wc"/></svg></div><div class="rw"><svg class="ic"><use href="#wf"/></svg><i class="ar"></i></div><div class="rw"><svg class="ic"><use href="#cm2"/></svg></div><div class="rw"><svg class="ic"><use href="#vb"/></svg></div><div class="rw"><svg class="ic"><use href="#vst"/></svg><i class="ar"></i></div><div class="rw"><svg class="ic"><use href="#gd"/></svg></div>
<div class="hgl hgs"></div>
<div class="rw"><svg class="ic"><use href="#tr1"/></svg></div><div class="rw"><svg class="ic"><use href="#cmp"/></svg></div><div class="rw"><svg class="ic"><use href="#ov1"/></svg></div><div class="rw"><svg class="ic"><use href="#ov2"/></svg></div><div class="rw"><svg class="ic"><use href="#c1"/></svg></div><div class="rw"><svg class="ic"><use href="#c2"/></svg></div><div class="rw"><svg class="ic"><use href="#c3"/></svg></div><div class="rw"><svg class="ic"><use href="#tbr2"/></svg></div><div class="rw"><svg class="ic"><use href="#frm"/></svg></div>
</aside>
<section class="lp">
<div class="ph"><span class="hg"></span><span>Pannello Layer</span><span class="hg"></span><span class="db"><svg width="12" height="13" viewBox="0 0 12 13" class="d-block"><path d="M2 5h6v6H2zM4 5V2h6v6H8" fill="none" stroke="#111" stroke-width="1.300"/></svg></span><span class="db"><svg width="12" height="13" viewBox="0 0 12 13" class="d-block"><path d="M2 3l8 8M10 3l-8 8" stroke="#111" stroke-width="1.300"/></svg></span></div>
<div class="ptb"><svg class="ic act"><use href="#brs"/></svg><svg class="ic"><use href="#ad"/></svg><svg class="ic"><use href="#ey"/></svg><svg class="ic"><use href="#fu"/></svg><svg class="ic" viewBox="0 0 24 24"><rect x="13" y="14" width="9" height="9" fill="#999"/><path d="M15 14v9M18 14v9" stroke="#eee"/><text x="3" y="15" font-size="21" font-family="Liberation Serif,serif" fill="#7a3f83">ε</text></svg><i class="ar"></i><svg class="ic"><use href="#exd"/></svg><svg class="ic"><use href="#cod"/></svg><svg class="ic"><use href="#rml"/></svg></div>
<div class="tr t1"><div class="lrow"><svg width="16" height="16" class="flex-none"><path d="M2 0v8h13" fill="none" stroke="#aaa" stroke-dasharray="1 2"/></svg><span class="cb"><svg viewBox="0 0 24 24"><use href="#xm"/></svg></span><span class="swc"></span><u class="ltxt">dati_esempi edifici</u></div></div>
<div class="hgl my-0 mx-5"></div>
<div class="ph mt-0 h24"><span class="hg"></span><span>Pannello Browser</span><span class="hg"></span><span class="db"><svg width="12" height="13" viewBox="0 0 12 13" class="d-block"><path d="M2 5h6v6H2zM4 5V2h6v6H8" fill="none" stroke="#111" stroke-width="1.300"/></svg></span><span class="db"><svg width="12" height="13" viewBox="0 0 12 13" class="d-block"><path d="M2 3l8 8M10 3l-8 8" stroke="#111" stroke-width="1.300"/></svg></span></div>
<div class="ptb"><svg class="ic"><use href="#adl"/></svg><svg class="ic"><use href="#rf"/></svg><svg class="ic"><use href="#fu"/></svg><svg class="ic"><use href="#cod"/></svg><svg class="ic"><use href="#inf"/></svg></div>
<div class="tr t2">
<div class="brow"><i class="exp"></i><i class="dts"></i><svg class="bi f"><use href="#fd"/></svg>C:/</div><div class="brow"><i class="exp"></i><i class="dts"></i><svg class="bi f"><use href="#fd"/></svg>D:/</div><div class="brow"><i class="exp"></i><i class="dts"></i><svg class="bi f"><use href="#fd"/></svg>E:/</div><div class="brow"><i class="exp"></i><i class="dts"></i><svg class="bi f"><use href="#fd"/></svg>F:/</div>
<div class="brow"><i class="exp0"></i><i class="dts"></i><svg class="bi" viewBox="0 0 24 24"><rect x="1" y="1" width="22" height="22" rx="3" fill="#6e9ac9"/><text x="12" y="15" font-size="8" fill="#dce8f4" text-anchor="middle">DB2</text></svg>DB2</div><div class="brow"><i class="exp0"></i><i class="dts"></i><svg class="bi"><use href="#mss"/></svg>MSSQL</div><div class="brow"><i class="exp"></i><i class="dts"></i><svg class="bi"><use href="#pgs"/></svg>PostGIS</div><div class="brow"><i class="exp"></i><i class="dts"></i><svg class="bi"><use href="#spl"/></svg>SpatiaLite</div><div class="brow"><i class="exp"></i><i class="dts"></i><svg class="bi"><use href="#afs"/></svg>ArcGisFeatureServer</div><div class="brow"><i class="exp0"></i><i class="dts"></i><svg class="bi"><use href="#ams"/></svg>ArcGisMapServer</div><div class="brow"><i class="exp"></i><i class="dts"></i><svg class="bi"><use href="#ows"/></svg>OWS</div><div class="brow"><i class="exp"></i><i class="dts"></i><svg class="bi"><use href="#xyz"/></svg>Tile Server (XYZ)</div><div class="brow"><i class="exp"></i><i class="dts"></i><svg class="bi"><use href="#wcs"/></svg>WCS</div><div class="brow"><i class="exp"></i><i class="dts"></i><svg class="bi"><use href="#wfs"/></svg>WFS</div><div class="brow"><i class="exp"></i><i class="dts"></i><svg class="bi"><use href="#xyz"/></svg>WMS</div>
<div class="vsb"><div class="sbtn"></div><div class="strk"></div><div class="sthm"></div><div class="sbtn"></div><div class="sbtn dn"></div></div>
</div>
</section>
<section class="ct">
<div class="cv"><svg viewBox="0 0 953 567"><svg x="0" y="0" width="953" height="567" viewBox="2 8 1556 1532" preserveAspectRatio="none"><g fill="#94700f" stroke="#000" stroke-width="1" stroke-linejoin="round">
<path vector-effect="non-scaling-stroke" d="M272 8L276 47 218 86 277 287 428 175 648 8z"/>
<path vector-effect="non-scaling-stroke" d="M612 395L672 605 722 808 598 895 555 735 570 712 557 655 385 780 403 855 418 858 470 1060 345 1155 230 693z"/>
<path vector-effect="non-scaling-stroke" d="M725 308L680 347 733 548 672 605 722 808 598 895 555 735 570 712 557 655 385 780 403 855 418 858 470 1060 492 1052 535 1205 545 1208 553 1232 610 1195 578 1050 890 800 857 685 825 703z"/>
<path vector-effect="non-scaling-stroke" d="M350 1155L492 1052 533 1215 543 1205 553 1232 612 1197 666 1387 445 1550z"/>
<path vector-effect="non-scaling-stroke" d="M598 1135L690 1060 705 1088 800 1025 800 1012 832 985 825 952 920 908 978 1128 666 1387 612 1197z"/>
<path vector-effect="non-scaling-stroke" d="M1023 597L915 685 967 868 920 908 978 1128 1150 983 1110 820 1090 828 1060 713 1078 703 1050 607 1032 625z"/>
<path vector-effect="non-scaling-stroke" d="M1110 0L750 288 825 568 923 490 899 385 921 347 953 462 1057 375 1030 240 1050 232 1062 268 1088 262 1101 318 1088 328 1127 468 1252 375 1235 307 1222 305 1140 0z"/>
<path vector-effect="non-scaling-stroke" d="M1252 375L1127 468 1136 543 1122 548 1168 688 1200 838 1216 840 1237 925 1369 828z"/>
<path vector-effect="non-scaling-stroke" d="M-5 885L35 858 150 1285 82 1342 87 1382 33 1408 35 1436 12 1436-5 1400-5 1212 20 1195-5 1140z"/>
<path vector-effect="non-scaling-stroke" d="M153 1282L82 1342 87 1382 33 1408 35 1436 25 1436 56 1550 225 1550z"/>
<path vector-effect="non-scaling-stroke" d="M1454 1128L1277 1262 1288 1310 1227 1350 1272 1503 1288 1485 1307 1550 1382 1550 1365 1480 1413 1438 1428 1495 1530 1408z"/>
<path vector-effect="non-scaling-stroke" d="M1155 1370L965 1503 978 1550 1205 1550z"/>
</g></svg>
<text transform="translate(421 433) rotate(-25.700)" textLength="476" lengthAdjust="spacingAndGlyphs" font-size="62" font-weight="700" font-style="italic" font-family="Liberation Sans,sans-serif" fill="none" stroke="#555" stroke-opacity=".26">Pigrecoinfinito</text>
<g font-family="Open Sans,sans-serif" font-size="14.500" font-weight="700" text-anchor="middle" fill="#000" stroke="#fff" stroke-width="3.500" paint-order="stroke" stroke-linejoin="round"><text x="233.500" y="40">13</text><text x="612.400" y="106">68</text><text x="758.700" y="243">72</text><text x="283.700" y="276">66</text><text x="386.500" y="303">67</text><text x="624" y="321">71</text><text x="482" y="424">70</text><text x="32" y="434">75</text><text x="303.300" y="482">69</text><text x="844.400" y="500">47</text><text x="73.700" y="533">65</text><text x="670" y="549">46</text><text x="569.600" y="570">45</text></g></svg>
<div class="ftb"><i class="gr"></i><svg class="ic" viewBox="0 0 24 24"><use href="#tg"/><text x="14" y="15.500" font-size="9" font-weight="700" text-anchor="middle" fill="#333">abc</text></svg><svg class="ic"><use href="#yg"/></svg><svg class="ic" viewBox="0 0 24 24"><rect x="0" y="1" width="24" height="22" fill="none" stroke="#2a76d8" stroke-width="1.500"/><path d="M1 10l5-6h15v12H6z" fill="#f3d44a" stroke="#b8971a"/><circle cx="19" cy="17" r="4" fill="#a01525"/><text x="12" y="13" font-size="8" font-weight="700" text-anchor="middle" fill="#333">ab</text></svg><svg class="ic" viewBox="0 0 24 24"><path d="M1 10l5-6h15v12H6z" fill="#eee" stroke="#999"/><circle cx="19" cy="17" r="4" fill="#777"/><text x="11" y="13" font-size="8" text-anchor="middle" fill="#555">ab</text></svg><svg class="ic" viewBox="0 0 24 24"><path d="M1 10l5-6h15v12H6z" fill="#eee" stroke="#999"/><ellipse cx="16" cy="19" rx="6" ry="3" fill="#fff" stroke="#777"/><circle cx="16" cy="19" r="1.500" fill="#333"/><text x="11" y="13" font-size="8" text-anchor="middle" fill="#555">abc</text></svg><svg class="ic" viewBox="0 0 24 24"><path d="M1 10l5-6h15v12H6z" fill="#eee" stroke="#999"/><rect x="14" y="13" width="10" height="10" fill="#777"/><path d="M16 18h6M19 15v6" stroke="#fff" stroke-width="2"/><text x="11" y="12" font-size="8" text-anchor="middle" fill="#555">abc</text></svg><svg class="ic" viewBox="0 0 24 24"><path d="M1 10l5-6h15v12H6z" fill="#eee" stroke="#999"/><rect x="14" y="13" width="10" height="10" fill="#888"/><circle cx="19" cy="18" r="3" fill="none" stroke="#fff" stroke-width="1.500"/><text x="11" y="12" font-size="8" text-anchor="middle" fill="#555">abc</text></svg><svg class="ic" viewBox="0 0 24 24"><path d="M1 10l5-6h15v12H6z" fill="#eee" stroke="#999"/><rect x="14" y="13" width="10" height="10" fill="#bbb"/><path d="M16 21l5-5" stroke="#fff" stroke-width="2"/><text x="11" y="12" font-size="8" text-anchor="middle" fill="#555">abc</text></svg><svg class="ic" viewBox="0 0 24 24"><path d="M4 17l4-5h15v10H8z" fill="#f3d44a" stroke="#b8971a"/><text x="0" y="9" font-size="9" font-weight="700" font-style="italic" fill="#333">Easy</text><text x="15" y="20" font-size="7" font-weight="700" text-anchor="middle" fill="#555">abc</text></svg></div></div>
<div class="hgl mt-1 mb-0 mx-5"></div>
<div class="ph at mt-0"><span class="hg"></span><span class="mx-4">dati_esempi edifici :: Elementi totali: 77, filtrati: 77, selezionati: 0</span><span class="hg"></span><span class="db"><svg width="12" height="13" viewBox="0 0 12 13" class="d-block"><path d="M2 5h6v6H2zM4 5V2h6v6H8" fill="none" stroke="#111" stroke-width="1.300"/></svg></span><span class="db"><svg width="12" height="13" viewBox="0 0 12 13" class="d-block"><path d="M2 3l8 8M10 3l-8 8" stroke="#111" stroke-width="1.300"/></svg></span></div>
<div class="atb"><svg class="is"><use href="#pc"/></svg><svg class="is"><use href="#gp"/></svg><svg class="is"><use href="#sv2"/></svg><svg class="is"><use href="#rf"/></svg><i class="vs"></i><svg class="is"><use href="#tt"/></svg><svg class="is"><use href="#tr"/></svg><i class="vs"></i><svg class="is" viewBox="0 0 24 24"><rect x="8" y="9" width="14" height="14" fill="#f5dc4a" stroke="#b89a10"/><text x="1" y="16" font-size="21" font-family="Liberation Serif,serif" fill="#7a3f83">ε</text></svg><svg class="is"><use href="#tb"/></svg><svg class="is"><use href="#sl"/></svg><svg class="is"><use href="#ds"/></svg><svg class="is"><use href="#fu"/></svg><svg class="is"><use href="#cod"/></svg><svg class="is"><use href="#ps"/></svg><svg class="is"><use href="#zs"/></svg><i class="vs"></i><svg class="is"><use href="#cp"/></svg><svg class="is"><use href="#pa"/></svg><i class="vs"></i><svg class="is"><use href="#tt"/></svg><svg class="is"><use href="#tt"/></svg><svg class="is"><use href="#ab"/></svg><i class="vs"></i><svg class="is"><use href="#frm"/></svg></div>
<div class="twr"><table class="qt"><colgroup><col class="c28"><col class="c100"><col class="c100"><col class="c100"><col class="c100"><col class="c65"><col class="c71"><col class="c59"><col class="c100"><col class="c100"><col class="c100"></colgroup>
<thead><tr><th></th><th>fid</th><th>edi5000_id</th><th>id_quartie</th><th>edifici_da</th><th>quo</th><th>alt</th><th>sup</th><th>vol</th><th>X</th><th>Y</th></tr></thead>
<tbody><tr><td class="rh">1</td><td>1</td><td>15423</td><td>9</td><td>15423</td><td>29.4</td><td>4.4</td><td>313....</td><td>1377.57</td><td></td><td></td></tr>
<tr><td class="rh">2</td><td>2</td><td>15393</td><td>9</td><td>15393</td><td>52.6</td><td>26.4</td><td>1695...</td><td>44768.72</td><td></td><td></td></tr>
<tr><td class="rh">3</td><td>3</td><td>15394</td><td>9</td><td>15394</td><td>50.4</td><td>25.1</td><td>354....</td><td>8894.28</td><td></td><td></td></tr>
<tr><td class="rh">4</td><td>4</td><td>15395</td><td>9</td><td>15395</td><td>47.1</td><td>22.3</td><td>366....</td><td>8164.615</td><td></td><td></td></tr>
<tr><td class="rh"></td><td></td><td></td><td></td><td></td><td></td><td></td><td></td><td></td><td></td><td></td></tr></tbody></table>
<div class="vsb"><div class="sbtn"></div><div class="sthm tth"></div><div class="strk flex-grow-1"></div><div class="sbtn"></div><div class="sbtn dn"></div></div></div>
<div class="afoot d-flex"><button class="qbtn fbtn" type="button"><svg><use href="#flw"/></svg>Mostra tutti gli elementi<i class="ar ms-n"></i></button><span class="ms-auto d-flex gap-1"><span class="qbtn"><svg width="28" height="27"><use href="#vtr"/></svg></span><span class="qbtn"><svg width="28" height="27"><use href="#vtb"/></svg></span></span></div>
</section>
<section class="rp">
<div class="ph ms-1 ps-1"><span class="hg"></span><span class="px-3">Stile layer</span><span class="hg"></span><span class="db"><svg width="12" height="13" viewBox="0 0 12 13" class="d-block"><path d="M2 5h6v6H2zM4 5V2h6v6H8" fill="none" stroke="#111" stroke-width="1.300"/></svg></span><span class="db"><svg width="12" height="13" viewBox="0 0 12 13" class="d-block"><path d="M2 3l8 8M10 3l-8 8" stroke="#111" stroke-width="1.300"/></svg></span></div>
<div class="qc rc ps-1"><svg width="22" height="18" class="me-1"><use href="#bw"/></svg>dati_esempi edifici<span class="ca"></span></div>
<div class="d-flex mt7">
<div class="sb"><div class="si"><svg><use href="#brs"/></svg></div><div class="si sel"><svg viewBox="0 0 24 24"><path d="M1 12l5-7h17v14H6z" fill="#d8e4c8" stroke="#6f8a4a"/><text x="14" y="15.500" font-size="9" font-weight="700" text-anchor="middle" fill="#234">abc</text></svg></div><div class="si"><svg><use href="#hie"/></svg></div><div class="si"><svg class="sm"><use href="#ur"/></svg></div></div>
<div class="rm">
<div class="d-flex rr1"><div class="qc cl ps-1"><svg width="22" height="18" class="me-1" viewBox="0 0 24 24"><use href="#tg"/><text x="14" y="15.500" font-size="9" font-weight="700" text-anchor="middle" fill="#333">abc</text></svg>Mostra le etichette per questo vettore<span class="ca"></span></div><div class="qc cr justify-content-center"><svg width="24" height="22"><use href="#cfg"/></svg></div></div>
<div class="d-flex rr2"><span class="lb2 ltxt">Etichetta con</span><div class="qi ce"><b class="sz1">123</b>&nbsp;fid<span class="qcar"></span></div><div class="qc cf justify-content-center"><svg width="20" height="22" viewBox="0 0 24 24"><text x="12" y="19" font-size="25" text-anchor="middle" font-family="Liberation Serif,serif" fill="#633a6e">ε</text></svg></div></div>
<div class="d-flex tabs"><span class="qtb"><svg viewBox="0 0 24 24"><text x="12" y="16" font-size="13" font-weight="700" text-anchor="middle" fill="#222">abc</text></svg></span><span class="qtb"><svg viewBox="0 0 24 24"><text x="2" y="10" font-size="10" fill="#999">+ab</text><text x="2" y="21" font-size="10" font-weight="700" fill="#777">&lt; c</text></svg></span><span class="qtb"><svg viewBox="0 0 24 24"><rect x="1" y="5" width="22" height="14" rx="5" fill="#bccdf0"/><text x="12" y="16" font-size="12" font-weight="700" text-anchor="middle" fill="#3a5a9c">abc</text></svg></span><span class="qtb"><svg><use href="#tsh"/></svg></span><span class="qtb"><svg><use href="#tsw"/></svg></span><span class="qtb on"><svg><use href="#tmv"/></svg></span><span class="qtb"><svg><use href="#tbp"/></svg></span></div>
<div class="ps">Posizionamento</div>
<div class="d-flex sa"><div class="bd">
<div class="rgrid"><div class="d-flex rg"><div><input class="form-check-input qr" type="radio" checked>Offset dal centroide</div><div><input class="form-check-input qr" type="radio">Orizzontale (lento)</div></div><div class="d-flex rg"><div><input class="form-check-input qr" type="radio">Attorno al centroide</div><div><input class="form-check-input qr" type="radio">Libero (lento)</div></div><div class="d-flex rg"><div><input class="form-check-input qr" type="radio">Usando il perimetro</div><div><input class="form-check-input qr" type="radio">Using perimeter (curved)</div></div></div>
<div class="d-flex rw2 rcn"><span class="lb">Centroide</span><input class="form-check-input qr" type="radio" checked><span class="ms-2 wcv">poligono visibile</span><input class="form-check-input qr" type="radio"><span class="ms-2">intero poligono</span><svg class="dp ms-auto me-1"><use href="#dp"/></svg></div>
<div class="d-flex rw2"><span class="lb"></span><span class="cb"></span><span class="ms-2">Forza punto dentro il poligono</span></div>
<div class="d-flex rq2 align-items-start"><span class="lb lq pt-1">Quadrante</span><div class="qg"><span class="qb"><svg viewBox="0 0 24 16"><use href="#qt"/><text x="14" y="12" font-size="10" text-anchor="middle" fill="#444">abc</text></svg></span><span class="qb"><svg viewBox="0 0 24 16"><use href="#qt"/><text x="14" y="12" font-size="10" text-anchor="middle" fill="#444">abc</text></svg></span><span class="qb"><svg viewBox="0 0 24 16"><use href="#qt"/><text x="14" y="12" font-size="10" text-anchor="middle" fill="#444">abc</text></svg></span><span class="qb"><svg viewBox="0 0 24 16"><use href="#qt"/><text x="14" y="12" font-size="10" text-anchor="middle" fill="#444">abc</text></svg></span><span class="qb on"><svg viewBox="0 0 24 16"><circle cx="12" cy="8" r="10"/><use href="#qt"/><text x="14" y="12" font-size="10" text-anchor="middle" fill="#222">abc</text></svg></span><span class="qb"><svg viewBox="0 0 24 16"><use href="#qt"/><text x="14" y="12" font-size="10" text-anchor="middle" fill="#444">abc</text></svg></span><span class="qb"><svg viewBox="0 0 24 16"><use href="#qt"/><text x="14" y="12" font-size="10" text-anchor="middle" fill="#444">abc</text></svg></span><span class="qb"><svg viewBox="0 0 24 16"><use href="#qt"/><text x="14" y="12" font-size="10" text-anchor="middle" fill="#444">abc</text></svg></span><span class="qb"><svg viewBox="0 0 24 16"><use href="#qt"/><text x="14" y="12" font-size="10" text-anchor="middle" fill="#444">abc</text></svg></span></div><svg class="dp m9 mt-1"><use href="#dp"/></svg></div>
<div class="d-flex ro2 align-items-center"><span class="lb">Offset X,Y</span><div class="qi inp so">0,0000<span class="sp2"></span></div><div class="qi inp so ms-2">0,0000<span class="sp2"></span></div><svg class="dp ms-auto me-1"><use href="#dp"/></svg></div>
<div class="d-flex ru align-items-center"><span class="lb"></span><div class="qc inp su ps-1">Unità mappa<span class="ca"></span></div><span class="qc inp sw justify-content-center"><svg width="22" height="22"><use href="#wch"/></svg></span><svg class="dp ms-auto me-1"><use href="#dp"/></svg></div>
<div class="d-flex rr align-items-center"><span class="lb">Rotazione</span><div class="qi srt">0,00°<span class="sp2"></span></div></div>
<div class="ln2"></div>
<div class="grp"><div class="gl"><i></i>Definito in funzione dei dati</div>
<div class="d-flex gr2"><span class="lb2a">Coordinata</span><div class="d-flex bx"><span>X</span><svg class="dp m7"><use href="#dp"/></svg><span class="m9">Y</span><svg class="dp m4"><use href="#dp"/></svg></div></div>
<div class="d-flex gr2"><span class="lb2b">Allineamento</span><span class="gry">orizzontale</span><svg class="dp m7"><use href="#dpg"/></svg><span class="gry m9">verticale</span><svg class="dp m7"><use href="#dpg"/></svg></div>
<div class="d-flex gr2"><span class="lb2c">Rotazione</span><svg class="dp"><use href="#dp"/></svg><span class="cb m20"><svg viewBox="0 0 24 24"><use href="#xm"/></svg></span><span class="ms-2">Mantieni i valori di rotazione</span></div>
</div>
<div class="grp"><div class="gl"><i></i>Priorità</div><span class="plo">Bassa</span><div class="sld"><span class="shd"></span></div><span class="phi">Alta</span></div>
</div>
<div class="svb"><div class="sbtn"></div><div class="thm"></div><div class="trk"></div><div class="sbtn"></div><div class="sbtn dn"></div></div></div>
<div class="d-flex mm"><span class="qbtn bu justify-content-center"><svg width="20" height="20"><use href="#und"/></svg></span><span class="qbtn bu justify-content-center ms-2"><svg width="20" height="20"><use href="#red"/></svg></span><span class="cb agc"><svg viewBox="0 0 24 24"><use href="#xm"/></svg></span><span class="ms-2 agt">Aggiornamento immediato</span><button class="qbtn ba justify-content-center" type="button">Apply</button></div>
</div></div>
</section>
</main>
<footer class="d-flex stb"><span class="s1">Coordinata</span><div class="qi s2">2374918.7,4222023.9</div><svg class="s3"><use href="#scl"/></svg><span class="s4">Scala</span><div class="qc s5 ps-1">1:662<span class="ca"></span></div><svg class="s6"><use href="#lck"/></svg><span class="s7">Lente d'ingrandimento</span><div class="qi s8">100%<span class="sp2"></span></div><span class="s9">Rotazione</span><div class="qi s10">0,0<span class="sp2"></span></div><span class="cb s11"><svg viewBox="0 0 24 24"><use href="#xm"/></svg></span><span class="s12">Visualizza</span><svg class="s13"><use href="#gbl"/></svg><span class="s14">EPSG:3004</span><svg class="s15"><use href="#msg"/></svg></footer>
<div class="stp"></div>

<div class="ov o1">1</div><div class="ov o2">2</div><div class="ov o3">3</div><div class="ov o4">4</div>
<svg class="arw" viewBox="0 0 44 58"><path d="M21 0l22 38H30v19H15V38H1z" fill="#dc6547"/></svg>
</body></html>
